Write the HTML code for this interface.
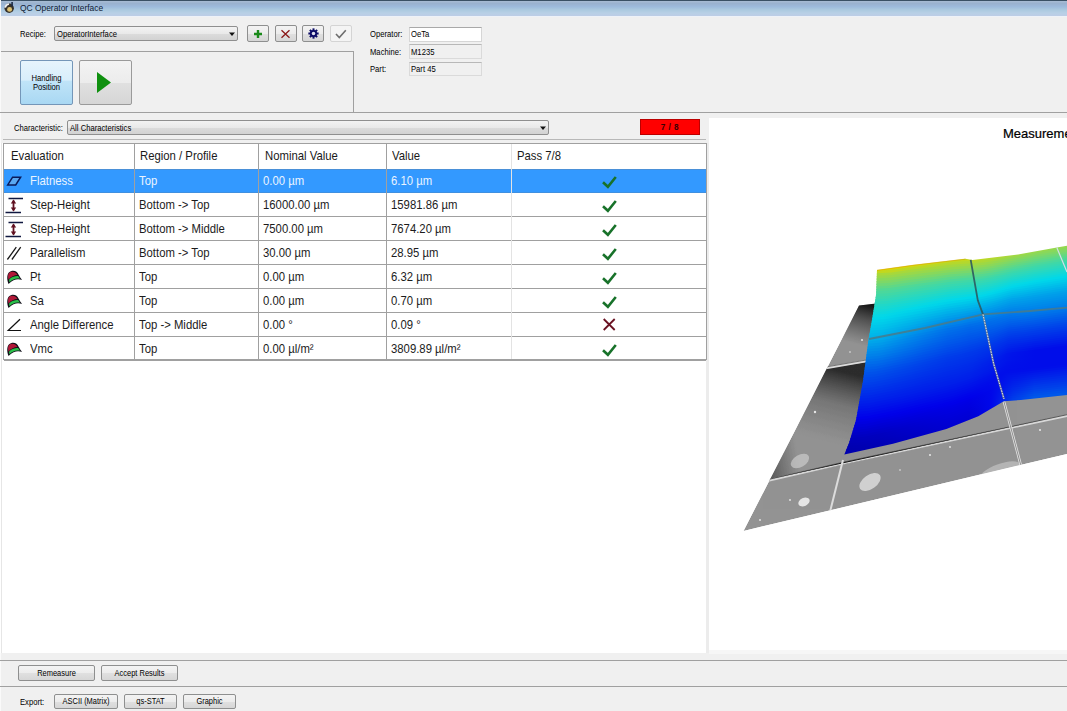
<!DOCTYPE html>
<html><head><meta charset="utf-8">
<style>
*{margin:0;padding:0;box-sizing:border-box}
html,body{width:1067px;height:711px;overflow:hidden;background:#f0f0f0;font-family:"Liberation Sans",sans-serif;color:#000;position:relative}
.a{position:absolute}
.t{position:absolute;white-space:nowrap;line-height:1}
.sm{font-size:9px;color:#000;transform:scaleX(0.85);transform-origin:0 0;}
.btn{position:absolute;border:1px solid #8e8f8f;border-radius:2px;background:linear-gradient(#f3f3f3 0%,#ececec 50%,#e0e0e0 51%,#d6d6d6 100%)}
.btxt{position:absolute;left:0;right:0;text-align:center;white-space:nowrap;line-height:1;font-size:9px;color:#000;transform:scaleX(0.83);transform-origin:50% 0}
.hl{position:absolute;height:1px;background:#a0a0a0}
.vl{position:absolute;width:1px;background:#a0a0a0}
.g{position:absolute;font-size:12.8px;transform:scaleX(0.885);transform-origin:0 0;line-height:1;white-space:nowrap;color:#1a1a1a}
.box{position:absolute;border:1px solid #d6d6d6;border-top-color:#a9a9a9}
</style></head><body>
<!-- title bar -->
<div class="a" style="left:0;top:1px;width:1067px;height:15px;background:linear-gradient(#a8bcd4 0px,#9ab2cf 2.5px,#9dbadb 5.5px,#accae0 9px,#b8d0e6 12px,#bdcde6 15px)"></div>
<div class="a" style="left:0;top:0;width:1067px;height:1px;background:#3a5064"></div>
<div class="a" style="left:0;top:16px;width:1067px;height:1px;background:#eef2f8"></div>
<div class="a" style="left:0;top:0;width:1px;height:711px;background:#fafafa"></div>
<svg class="a" style="left:3px;top:1px" width="12" height="13" viewBox="0 0 12 13"><circle cx="6.2" cy="7.2" r="4.7" fill="#35302a"/><ellipse cx="6.6" cy="8.4" rx="2.5" ry="2.3" fill="#dcc070"/><path d="M2.2 6.6Q2.8 3.4 6 3" stroke="#f4f4f4" stroke-width="1.7" fill="none"/><rect x="8.3" y="1" width="1.6" height="4.2" fill="#1c2c48"/></svg>
<div class="t" style="left:20px;top:2.8px;font-size:9.5px;color:#102034;transform:scaleX(0.885);transform-origin:0 0">QC Operator Interface</div>

<!-- recipe row -->
<div class="t sm" style="left:19.5px;top:29.5px">Recipe:</div>
<div class="a" style="left:54px;top:26px;width:184px;height:15px;border:1px solid #8f8f8f;border-radius:2px;background:linear-gradient(#f3f3f3,#e9e9e9 50%,#dcdcdc 51%,#d2d2d2)"></div>
<div class="t sm" style="left:56.5px;top:29.5px">OperatorInterface</div>
<svg class="a" style="left:229px;top:32px" width="7" height="5"><path d="M0 0.5h6l-3 3.5z" fill="#111"/></svg>

<div class="btn" style="left:247px;top:25px;width:22px;height:17px"></div>
<svg class="a" style="left:253px;top:29px" width="10" height="10" viewBox="0 0 10 10"><path d="M5 1V9M1 5H9" stroke="#1a8a1a" stroke-width="2.4"/></svg>
<div class="btn" style="left:275px;top:25px;width:22px;height:17px"></div>
<svg class="a" style="left:280px;top:28.5px" width="11" height="10" viewBox="0 0 11 10"><path d="M1.5 1.2L9.5 8.8M9.5 1.2L1.5 8.8" stroke="#8a1818" stroke-width="1.3"/></svg>
<div class="btn" style="left:302px;top:25px;width:22px;height:17px"></div>
<svg class="a" style="left:307.5px;top:28px" width="11" height="11" viewBox="0 0 12 12"><g fill="#0c0c66"><circle cx="6" cy="6" r="3.9"/><rect x="4.9" y="0.4" width="2.2" height="11.2"/><rect x="0.4" y="4.9" width="11.2" height="2.2"/><rect x="4.9" y="0.4" width="2.2" height="11.2" transform="rotate(45 6 6)"/><rect x="4.9" y="0.4" width="2.2" height="11.2" transform="rotate(-45 6 6)"/></g><circle cx="6" cy="6" r="1.9" fill="#e0e0ee"/></svg>
<div class="a" style="left:330px;top:25px;width:22px;height:17px;border:1px solid #d4d4d4;border-radius:2px;background:#f4f4f4"></div>
<svg class="a" style="left:335px;top:29px" width="12" height="10" viewBox="0 0 12 10"><path d="M1 5L4.3 8.6L10.8 1.2" stroke="#6e6e6e" stroke-width="1.6" fill="none"/></svg>

<!-- group panel -->
<div class="hl" style="left:1px;top:51px;width:353px"></div>
<div class="vl" style="left:353px;top:51px;height:62px"></div>
<div class="a" style="left:20px;top:60px;width:53px;height:45px;border:1px solid #7496b8;border-radius:2px;background:linear-gradient(#e6f4fc,#d8eefb 45%,#c0e4f8 46%,#a9d8f3)"></div>
<div class="t sm" style="left:20px;width:53px;text-align:center;transform-origin:50% 0;top:73.5px;line-height:9.5px">Handling<br>Position</div>
<div class="btn" style="left:79px;top:60px;width:53px;height:45px;border-color:#9a9a9a"></div>
<svg class="a" style="left:96px;top:71px" width="16" height="23" viewBox="0 0 16 23"><path d="M1 1L15 11.5L1 22z" fill="#0f900f"/></svg>

<!-- operator info -->
<div class="t sm" style="left:369.5px;top:30px">Operator:</div>
<div class="t sm" style="left:369.5px;top:47.8px">Machine:</div>
<div class="t sm" style="left:369.5px;top:65.3px">Part:</div>
<div class="box" style="left:409px;top:27px;width:73px;height:14.5px;background:#fff"></div>
<div class="box" style="left:409px;top:44px;width:73px;height:14.5px;background:#f0f0f0;border-color:#dadada;border-top-color:#b8b8b8"></div>
<div class="box" style="left:409px;top:61.5px;width:73px;height:14px;background:#f0f0f0;border-color:#dadada;border-top-color:#b8b8b8"></div>
<div class="t sm" style="left:411px;top:30.3px">OeTa</div>
<div class="t sm" style="left:411px;top:47.8px">M1235</div>
<div class="t sm" style="left:411px;top:65.3px">Part 45</div>

<div class="hl" style="left:0;top:112px;width:1067px"></div>

<!-- characteristic row -->
<div class="t sm" style="left:13.5px;top:123.5px">Characteristic:</div>
<div class="a" style="left:67px;top:120px;width:482px;height:15px;border:1px solid #8f8f8f;border-radius:2px;background:linear-gradient(#f3f3f3,#e9e9e9 50%,#dcdcdc 51%,#d2d2d2)"></div>
<div class="t sm" style="left:70px;top:123.5px">All Characteristics</div>
<svg class="a" style="left:539.5px;top:125.5px" width="7" height="5"><path d="M0 0.5h6l-3 3.5z" fill="#111"/></svg>
<div class="a" style="left:640px;top:119px;width:60px;height:16px;background:#f00;border:1px solid #b00"></div>
<div class="t" style="left:640px;width:60px;text-align:center;top:123.3px;font-size:8.6px;font-weight:bold;letter-spacing:0.5px;color:#3a0000;transform:scaleX(0.95);transform-origin:50% 0">7 / 8</div>
<div class="hl" style="left:3px;top:139px;width:703px;background:#b8b8b8"></div>

<!-- left white panel & right panel -->
<div class="a" style="left:0;top:143px;width:706px;height:510px;background:#fff"></div><div class="a" style="left:706px;top:143px;width:3px;height:510px;background:#ececec"></div><div class="a" style="left:1px;top:143px;width:1px;height:510px;background:#e6e6e6"></div>
<div class="a" style="left:709px;top:118px;width:358px;height:532px;background:#fff"></div><div class="a" style="left:709px;top:650px;width:358px;height:4px;background:#f6f6f6"></div>

<!--3D--><svg class="a" style="left:0;top:0" width="1067" height="711" viewBox="0 0 1067 711">
<defs>
<filter id="blur8" x="-50%" y="-50%" width="200%" height="200%"><feGaussianBlur stdDeviation="10"/></filter>
<linearGradient id="dk1" gradientUnits="userSpaceOnUse" x1="835" y1="370" x2="818" y2="440"><stop offset="0" stop-color="#1a1a1a" stop-opacity="0.85"/><stop offset="0.45" stop-color="#333" stop-opacity="0.3"/><stop offset="1" stop-color="#444" stop-opacity="0"/></linearGradient>
<linearGradient id="dk2" gradientUnits="userSpaceOnUse" x1="868" y1="305" x2="858" y2="345"><stop offset="0" stop-color="#101010" stop-opacity="0.95"/><stop offset="0.35" stop-color="#222" stop-opacity="0.6"/><stop offset="1" stop-color="#333" stop-opacity="0"/></linearGradient>
<linearGradient id="dk3" gradientUnits="userSpaceOnUse" x1="770" y1="470" x2="800" y2="465"><stop offset="0" stop-color="#222" stop-opacity="0.5"/><stop offset="1" stop-color="#333" stop-opacity="0"/></linearGradient>
<clipPath id="pc"><polygon points="859,305.5 876,303.5 1075,268 1075,452 743.5,531"/></clipPath>
</defs>
<g clip-path="url(#pc)">
<polygon points="859,305.5 876,303.5 1075,268 1075,452 743.5,531" fill="#939393"/>
<polygon points="840,300 885,300 878,362 820,368" fill="url(#dk2)"/>
<polygon points="822,369 880,360 862,465 768,481" fill="url(#dk1)"/>
<polygon points="822,369 790,430 768,481 810,472" fill="url(#dk3)"/>
<path d="M823,368.5 L872,360" stroke="#dcdcdc" stroke-width="2.4"/>
<path d="M823,367.5 L872,359" stroke="#505050" stroke-width="0.7"/>

<path d="M766,481 L844,463 L1075,414" stroke="#d8d8d8" stroke-width="2.4"/>
<path d="M766,480 L844,462 L1075,413" stroke="#404040" stroke-width="0.8"/>
<path d="M843,460 L830,512" stroke="#dcdcdc" stroke-width="2"/>
<path d="M1003,398 L1021,466" stroke="#e4e4e4" stroke-width="2.6"/>
<path d="M1003,398 L1021,466" stroke="#555" stroke-width="0.6"/>
<ellipse cx="804" cy="502" rx="6" ry="4" fill="#eee" opacity="0.9" transform="rotate(-25 804 502)"/>
<ellipse cx="800" cy="461" rx="10" ry="6" fill="#ddd" opacity="0.55" transform="rotate(-30 800 461)"/>
<ellipse cx="870" cy="482" rx="12" ry="7" fill="#e4e4e4" opacity="0.75" transform="rotate(-35 870 482)"/>
<ellipse cx="1000" cy="472" rx="22" ry="8" fill="#ddd" opacity="0.45" transform="rotate(-20 1000 472)"/>
<ellipse cx="972" cy="410" rx="6" ry="3" fill="#eee" opacity="0.6"/>
<g fill="#fff" opacity="0.8"><circle cx="862" cy="340" r="1"/><circle cx="850" cy="352" r="0.8"/><circle cx="815" cy="412" r="1.2"/><circle cx="790" cy="500" r="0.9"/><circle cx="930" cy="455" r="1"/><circle cx="950" cy="447" r="0.9"/><circle cx="1040" cy="430" r="1"/><circle cx="900" cy="470" r="0.8"/><circle cx="760" cy="520" r="0.9"/></g>
</g>
<defs><clipPath id="sc"><path d="M877.0,270.0 L912.7,265.0 L965.4,258.8 L972.5,259.9 L1018.0,254.6 L1056.8,247.6 L1075.0,244.5 L1075,394 1075.0,394.0 L1020.9,400.0 L1003.8,401.3 L978.3,416.2 L946.4,429.0 L893.0,443.8 L844.3,454.5 844.3,454.5 L849.0,443.0 L856.0,420.0 L863.0,381.0 L868.6,339.0 L872.0,320.0 L876.0,295.0 L877.0,270.0 Z"/></clipPath><linearGradient id="r0" gradientUnits="userSpaceOnUse" x1="850" y1="0" x2="1067" y2="0"><stop offset="0" stop-color="#e0cc00"/><stop offset="0.15" stop-color="#e0d400"/><stop offset="0.3" stop-color="#d4d80c"/><stop offset="0.45" stop-color="#c6d81b"/><stop offset="0.55" stop-color="#c2d81f"/><stop offset="0.65" stop-color="#b7d82b"/><stop offset="0.75" stop-color="#a2d841"/><stop offset="0.85" stop-color="#96d84d"/><stop offset="1.0" stop-color="#96d84d"/></linearGradient><linearGradient id="r1" gradientUnits="userSpaceOnUse" x1="850" y1="0" x2="1067" y2="0"><stop offset="0" stop-color="#c6d81b"/><stop offset="0.15" stop-color="#c2d81e"/><stop offset="0.3" stop-color="#bbd826"/><stop offset="0.45" stop-color="#b5d82c"/><stop offset="0.55" stop-color="#b3d82e"/><stop offset="0.65" stop-color="#a8d83a"/><stop offset="0.75" stop-color="#94d84f"/><stop offset="0.85" stop-color="#89d85a"/><stop offset="1.0" stop-color="#89d85a"/></linearGradient><linearGradient id="r2" gradientUnits="userSpaceOnUse" x1="850" y1="0" x2="1067" y2="0"><stop offset="0" stop-color="#a9d839"/><stop offset="0.15" stop-color="#a8d83a"/><stop offset="0.3" stop-color="#a6d83c"/><stop offset="0.45" stop-color="#a5d83d"/><stop offset="0.55" stop-color="#a4d83e"/><stop offset="0.65" stop-color="#9ad848"/><stop offset="0.75" stop-color="#87d85d"/><stop offset="0.85" stop-color="#7dd867"/><stop offset="1.0" stop-color="#7dd867"/></linearGradient><linearGradient id="r3" gradientUnits="userSpaceOnUse" x1="850" y1="0" x2="1067" y2="0"><stop offset="0" stop-color="#9bd848"/><stop offset="0.15" stop-color="#9ad849"/><stop offset="0.3" stop-color="#98d84b"/><stop offset="0.45" stop-color="#96d84d"/><stop offset="0.55" stop-color="#96d84d"/><stop offset="0.65" stop-color="#8cd857"/><stop offset="0.75" stop-color="#7ad86b"/><stop offset="0.85" stop-color="#70d875"/><stop offset="1.0" stop-color="#70d875"/></linearGradient><linearGradient id="r4" gradientUnits="userSpaceOnUse" x1="850" y1="0" x2="1067" y2="0"><stop offset="0" stop-color="#8cd857"/><stop offset="0.15" stop-color="#8bd858"/><stop offset="0.3" stop-color="#89d85a"/><stop offset="0.45" stop-color="#87d85c"/><stop offset="0.55" stop-color="#87d85d"/><stop offset="0.65" stop-color="#7ed866"/><stop offset="0.75" stop-color="#6cd878"/><stop offset="0.85" stop-color="#63d882"/><stop offset="1.0" stop-color="#63d882"/></linearGradient><linearGradient id="r5" gradientUnits="userSpaceOnUse" x1="850" y1="0" x2="1067" y2="0"><stop offset="0" stop-color="#7ed866"/><stop offset="0.15" stop-color="#7dd867"/><stop offset="0.3" stop-color="#7bd869"/><stop offset="0.45" stop-color="#79d86b"/><stop offset="0.55" stop-color="#78d86c"/><stop offset="0.65" stop-color="#6fd875"/><stop offset="0.75" stop-color="#5fd886"/><stop offset="0.85" stop-color="#56d890"/><stop offset="1.0" stop-color="#56d890"/></linearGradient><linearGradient id="r6" gradientUnits="userSpaceOnUse" x1="850" y1="0" x2="1067" y2="0"><stop offset="0" stop-color="#70d875"/><stop offset="0.15" stop-color="#6fd876"/><stop offset="0.3" stop-color="#6cd879"/><stop offset="0.45" stop-color="#6ad87b"/><stop offset="0.55" stop-color="#69d87c"/><stop offset="0.65" stop-color="#61d884"/><stop offset="0.75" stop-color="#52d894"/><stop offset="0.85" stop-color="#49d89d"/><stop offset="1.0" stop-color="#49d89d"/></linearGradient><linearGradient id="r7" gradientUnits="userSpaceOnUse" x1="850" y1="0" x2="1067" y2="0"><stop offset="0" stop-color="#62d884"/><stop offset="0.15" stop-color="#60d885"/><stop offset="0.3" stop-color="#5ed888"/><stop offset="0.45" stop-color="#5bd88a"/><stop offset="0.55" stop-color="#5ad88b"/><stop offset="0.65" stop-color="#53d893"/><stop offset="0.75" stop-color="#46d8a1"/><stop offset="0.85" stop-color="#3ed8a8"/><stop offset="1.0" stop-color="#3ed8a8"/></linearGradient><linearGradient id="r8" gradientUnits="userSpaceOnUse" x1="850" y1="0" x2="1067" y2="0"><stop offset="0" stop-color="#54d892"/><stop offset="0.15" stop-color="#52d893"/><stop offset="0.3" stop-color="#4fd897"/><stop offset="0.45" stop-color="#4cd89a"/><stop offset="0.55" stop-color="#4cd89a"/><stop offset="0.65" stop-color="#46d8a0"/><stop offset="0.75" stop-color="#3bd8ab"/><stop offset="0.85" stop-color="#36d8b1"/><stop offset="1.0" stop-color="#36d8b1"/></linearGradient><linearGradient id="r9" gradientUnits="userSpaceOnUse" x1="850" y1="0" x2="1067" y2="0"><stop offset="0" stop-color="#4cd89a"/><stop offset="0.15" stop-color="#4ad89d"/><stop offset="0.3" stop-color="#45d8a2"/><stop offset="0.45" stop-color="#40d8a6"/><stop offset="0.55" stop-color="#3fd8a8"/><stop offset="0.65" stop-color="#3ad8ac"/><stop offset="0.75" stop-color="#32d8b6"/><stop offset="0.85" stop-color="#2dd8bb"/><stop offset="1.0" stop-color="#2dd8bb"/></linearGradient><linearGradient id="r10" gradientUnits="userSpaceOnUse" x1="850" y1="0" x2="1067" y2="0"><stop offset="0" stop-color="#44d8a3"/><stop offset="0.15" stop-color="#41d8a5"/><stop offset="0.3" stop-color="#3cd8ab"/><stop offset="0.45" stop-color="#37d8b0"/><stop offset="0.55" stop-color="#36d8b1"/><stop offset="0.65" stop-color="#32d8b6"/><stop offset="0.75" stop-color="#29d8bf"/><stop offset="0.85" stop-color="#24d8c4"/><stop offset="1.0" stop-color="#24d8c4"/></linearGradient><linearGradient id="r11" gradientUnits="userSpaceOnUse" x1="850" y1="0" x2="1067" y2="0"><stop offset="0" stop-color="#3cd8ab"/><stop offset="0.15" stop-color="#39d8ae"/><stop offset="0.3" stop-color="#33d8b4"/><stop offset="0.45" stop-color="#2ed8b9"/><stop offset="0.55" stop-color="#2dd8ba"/><stop offset="0.65" stop-color="#29d8bf"/><stop offset="0.75" stop-color="#20d8c8"/><stop offset="0.85" stop-color="#1bd8cd"/><stop offset="1.0" stop-color="#1bd8cd"/></linearGradient><linearGradient id="r12" gradientUnits="userSpaceOnUse" x1="850" y1="0" x2="1067" y2="0"><stop offset="0" stop-color="#34d8b4"/><stop offset="0.15" stop-color="#31d8b7"/><stop offset="0.3" stop-color="#2bd8bd"/><stop offset="0.45" stop-color="#25d8c2"/><stop offset="0.55" stop-color="#24d8c4"/><stop offset="0.65" stop-color="#20d8c9"/><stop offset="0.75" stop-color="#17d8d1"/><stop offset="0.85" stop-color="#13d8d6"/><stop offset="1.0" stop-color="#13d8d6"/></linearGradient><linearGradient id="r13" gradientUnits="userSpaceOnUse" x1="850" y1="0" x2="1067" y2="0"><stop offset="0" stop-color="#2bd8bc"/><stop offset="0.15" stop-color="#28d8bf"/><stop offset="0.3" stop-color="#22d8c6"/><stop offset="0.45" stop-color="#1cd8cc"/><stop offset="0.55" stop-color="#1bd8cd"/><stop offset="0.65" stop-color="#17d8d2"/><stop offset="0.75" stop-color="#0ed8db"/><stop offset="0.85" stop-color="#0ad8df"/><stop offset="1.0" stop-color="#0ad8df"/></linearGradient><linearGradient id="r14" gradientUnits="userSpaceOnUse" x1="850" y1="0" x2="1067" y2="0"><stop offset="0" stop-color="#23d8c5"/><stop offset="0.15" stop-color="#20d8c8"/><stop offset="0.3" stop-color="#19d8cf"/><stop offset="0.45" stop-color="#13d8d5"/><stop offset="0.55" stop-color="#12d8d7"/><stop offset="0.65" stop-color="#0ed8db"/><stop offset="0.75" stop-color="#06d8e4"/><stop offset="0.85" stop-color="#01d8e8"/><stop offset="1.0" stop-color="#01d8e8"/></linearGradient><linearGradient id="r15" gradientUnits="userSpaceOnUse" x1="850" y1="0" x2="1067" y2="0"><stop offset="0" stop-color="#1cd8cc"/><stop offset="0.15" stop-color="#19d8d0"/><stop offset="0.3" stop-color="#11d8d8"/><stop offset="0.45" stop-color="#0bd8df"/><stop offset="0.55" stop-color="#09d8e0"/><stop offset="0.65" stop-color="#05d8e5"/><stop offset="0.75" stop-color="#00d6ea"/><stop offset="0.85" stop-color="#00d2ea"/><stop offset="1.0" stop-color="#00d2ea"/></linearGradient><linearGradient id="r16" gradientUnits="userSpaceOnUse" x1="850" y1="0" x2="1067" y2="0"><stop offset="0" stop-color="#16d8d3"/><stop offset="0.15" stop-color="#12d8d7"/><stop offset="0.3" stop-color="#09d8e0"/><stop offset="0.45" stop-color="#02d8e8"/><stop offset="0.55" stop-color="#00d8ea"/><stop offset="0.65" stop-color="#00d5ea"/><stop offset="0.75" stop-color="#00ceea"/><stop offset="0.85" stop-color="#00caea"/><stop offset="1.0" stop-color="#00caea"/></linearGradient><linearGradient id="r17" gradientUnits="userSpaceOnUse" x1="850" y1="0" x2="1067" y2="0"><stop offset="0" stop-color="#0fd8da"/><stop offset="0.15" stop-color="#0bd8de"/><stop offset="0.3" stop-color="#01d8e8"/><stop offset="0.45" stop-color="#00d2ea"/><stop offset="0.55" stop-color="#00d0ea"/><stop offset="0.65" stop-color="#00ccea"/><stop offset="0.75" stop-color="#00c5ea"/><stop offset="0.85" stop-color="#00c2ea"/><stop offset="1.0" stop-color="#00c2ea"/></linearGradient><linearGradient id="r18" gradientUnits="userSpaceOnUse" x1="850" y1="0" x2="1067" y2="0"><stop offset="0" stop-color="#09d8e0"/><stop offset="0.15" stop-color="#04d8e6"/><stop offset="0.3" stop-color="#00d2ea"/><stop offset="0.45" stop-color="#00c9ea"/><stop offset="0.55" stop-color="#00c7ea"/><stop offset="0.65" stop-color="#00c4ea"/><stop offset="0.75" stop-color="#00bdea"/><stop offset="0.85" stop-color="#00baea"/><stop offset="1.0" stop-color="#00baea"/></linearGradient><linearGradient id="r19" gradientUnits="userSpaceOnUse" x1="850" y1="0" x2="1067" y2="0"><stop offset="0" stop-color="#02d8e7"/><stop offset="0.15" stop-color="#00d6ea"/><stop offset="0.3" stop-color="#00cbea"/><stop offset="0.45" stop-color="#00c1ea"/><stop offset="0.55" stop-color="#00beea"/><stop offset="0.65" stop-color="#00bbea"/><stop offset="0.75" stop-color="#00b5ea"/><stop offset="0.85" stop-color="#00b2ea"/><stop offset="1.0" stop-color="#00b2ea"/></linearGradient><linearGradient id="r20" gradientUnits="userSpaceOnUse" x1="850" y1="0" x2="1067" y2="0"><stop offset="0" stop-color="#00d6ea"/><stop offset="0.15" stop-color="#00d0ea"/><stop offset="0.3" stop-color="#00c3ea"/><stop offset="0.45" stop-color="#00b8ea"/><stop offset="0.55" stop-color="#00b6ea"/><stop offset="0.65" stop-color="#00b2ea"/><stop offset="0.75" stop-color="#00adea"/><stop offset="0.85" stop-color="#00aaea"/><stop offset="1.0" stop-color="#00aaea"/></linearGradient><linearGradient id="r21" gradientUnits="userSpaceOnUse" x1="850" y1="0" x2="1067" y2="0"><stop offset="0" stop-color="#00d1ea"/><stop offset="0.15" stop-color="#00cbea"/><stop offset="0.3" stop-color="#00bcea"/><stop offset="0.45" stop-color="#00b0ea"/><stop offset="0.55" stop-color="#00adea"/><stop offset="0.65" stop-color="#00aaea"/><stop offset="0.75" stop-color="#00a4ea"/><stop offset="0.85" stop-color="#00a2ea"/><stop offset="1.0" stop-color="#00a2ea"/></linearGradient><linearGradient id="r22" gradientUnits="userSpaceOnUse" x1="850" y1="0" x2="1067" y2="0"><stop offset="0" stop-color="#00cdea"/><stop offset="0.15" stop-color="#00c5ea"/><stop offset="0.3" stop-color="#00b5ea"/><stop offset="0.45" stop-color="#00a7ea"/><stop offset="0.55" stop-color="#00a4ea"/><stop offset="0.65" stop-color="#00a2ea"/><stop offset="0.75" stop-color="#009eea"/><stop offset="0.85" stop-color="#009cea"/><stop offset="1.0" stop-color="#009cea"/></linearGradient><linearGradient id="r23" gradientUnits="userSpaceOnUse" x1="850" y1="0" x2="1067" y2="0"><stop offset="0" stop-color="#00c8ea"/><stop offset="0.15" stop-color="#00c0ea"/><stop offset="0.3" stop-color="#00aeea"/><stop offset="0.45" stop-color="#009fea"/><stop offset="0.55" stop-color="#009bea"/><stop offset="0.65" stop-color="#009aea"/><stop offset="0.75" stop-color="#0098ea"/><stop offset="0.85" stop-color="#0097ea"/><stop offset="1.0" stop-color="#0097ea"/></linearGradient><linearGradient id="r24" gradientUnits="userSpaceOnUse" x1="850" y1="0" x2="1067" y2="0"><stop offset="0" stop-color="#00c3ea"/><stop offset="0.15" stop-color="#00baea"/><stop offset="0.3" stop-color="#00a7ea"/><stop offset="0.45" stop-color="#0096ea"/><stop offset="0.55" stop-color="#0092ea"/><stop offset="0.65" stop-color="#0092ea"/><stop offset="0.75" stop-color="#0092ea"/><stop offset="0.85" stop-color="#0092ea"/><stop offset="1.0" stop-color="#0092ea"/></linearGradient><linearGradient id="r25" gradientUnits="userSpaceOnUse" x1="850" y1="0" x2="1067" y2="0"><stop offset="0" stop-color="#00bfea"/><stop offset="0.15" stop-color="#00b5ea"/><stop offset="0.3" stop-color="#00a0ea"/><stop offset="0.45" stop-color="#008dea"/><stop offset="0.55" stop-color="#0089ea"/><stop offset="0.65" stop-color="#008aea"/><stop offset="0.75" stop-color="#008cea"/><stop offset="0.85" stop-color="#008dea"/><stop offset="1.0" stop-color="#008dea"/></linearGradient><linearGradient id="r26" gradientUnits="userSpaceOnUse" x1="850" y1="0" x2="1067" y2="0"><stop offset="0" stop-color="#00baea"/><stop offset="0.15" stop-color="#00b0ea"/><stop offset="0.3" stop-color="#0099ea"/><stop offset="0.45" stop-color="#0085ea"/><stop offset="0.55" stop-color="#0080ea"/><stop offset="0.65" stop-color="#0082ea"/><stop offset="0.75" stop-color="#0086ea"/><stop offset="0.85" stop-color="#0088ea"/><stop offset="1.0" stop-color="#0088ea"/></linearGradient><linearGradient id="r27" gradientUnits="userSpaceOnUse" x1="850" y1="0" x2="1067" y2="0"><stop offset="0" stop-color="#00b3ea"/><stop offset="0.15" stop-color="#00a8ea"/><stop offset="0.3" stop-color="#0091ea"/><stop offset="0.45" stop-color="#007cea"/><stop offset="0.55" stop-color="#0077ea"/><stop offset="0.65" stop-color="#007aea"/><stop offset="0.75" stop-color="#007fea"/><stop offset="0.85" stop-color="#0083ea"/><stop offset="1.0" stop-color="#0083ea"/></linearGradient><linearGradient id="r28" gradientUnits="userSpaceOnUse" x1="850" y1="0" x2="1067" y2="0"><stop offset="0" stop-color="#00acea"/><stop offset="0.15" stop-color="#00a1ea"/><stop offset="0.3" stop-color="#0089ea"/><stop offset="0.45" stop-color="#0073ea"/><stop offset="0.55" stop-color="#006eea"/><stop offset="0.65" stop-color="#0072ea"/><stop offset="0.75" stop-color="#0079ea"/><stop offset="0.85" stop-color="#007dea"/><stop offset="1.0" stop-color="#007dea"/></linearGradient><linearGradient id="r29" gradientUnits="userSpaceOnUse" x1="850" y1="0" x2="1067" y2="0"><stop offset="0" stop-color="#00a5ea"/><stop offset="0.15" stop-color="#009aea"/><stop offset="0.3" stop-color="#0082ea"/><stop offset="0.45" stop-color="#006eea"/><stop offset="0.55" stop-color="#0068ea"/><stop offset="0.65" stop-color="#006cea"/><stop offset="0.75" stop-color="#0074ea"/><stop offset="0.85" stop-color="#0078ea"/><stop offset="1.0" stop-color="#0078ea"/></linearGradient><linearGradient id="r30" gradientUnits="userSpaceOnUse" x1="850" y1="0" x2="1067" y2="0"><stop offset="0" stop-color="#009dea"/><stop offset="0.15" stop-color="#0093ea"/><stop offset="0.3" stop-color="#007dea"/><stop offset="0.45" stop-color="#0069ea"/><stop offset="0.55" stop-color="#0064ea"/><stop offset="0.65" stop-color="#0068ea"/><stop offset="0.75" stop-color="#006eea"/><stop offset="0.85" stop-color="#0072ea"/><stop offset="1.0" stop-color="#0072ea"/></linearGradient><linearGradient id="r31" gradientUnits="userSpaceOnUse" x1="850" y1="0" x2="1067" y2="0"><stop offset="0" stop-color="#0096ea"/><stop offset="0.15" stop-color="#008cea"/><stop offset="0.3" stop-color="#0077ea"/><stop offset="0.45" stop-color="#0064ea"/><stop offset="0.55" stop-color="#0060ea"/><stop offset="0.65" stop-color="#0063ea"/><stop offset="0.75" stop-color="#0068ea"/><stop offset="0.85" stop-color="#006bea"/><stop offset="1.0" stop-color="#006bea"/></linearGradient><linearGradient id="r32" gradientUnits="userSpaceOnUse" x1="850" y1="0" x2="1067" y2="0"><stop offset="0" stop-color="#008fea"/><stop offset="0.15" stop-color="#0085ea"/><stop offset="0.3" stop-color="#0072ea"/><stop offset="0.45" stop-color="#0060ea"/><stop offset="0.55" stop-color="#005bea"/><stop offset="0.65" stop-color="#005eea"/><stop offset="0.75" stop-color="#0062ea"/><stop offset="0.85" stop-color="#0064ea"/><stop offset="1.0" stop-color="#0064ea"/></linearGradient><linearGradient id="r33" gradientUnits="userSpaceOnUse" x1="850" y1="0" x2="1067" y2="0"><stop offset="0" stop-color="#0088ea"/><stop offset="0.15" stop-color="#007fea"/><stop offset="0.3" stop-color="#006cea"/><stop offset="0.45" stop-color="#005bea"/><stop offset="0.55" stop-color="#0057ea"/><stop offset="0.65" stop-color="#0059ea"/><stop offset="0.75" stop-color="#005cea"/><stop offset="0.85" stop-color="#005dea"/><stop offset="1.0" stop-color="#005dea"/></linearGradient><linearGradient id="r34" gradientUnits="userSpaceOnUse" x1="850" y1="0" x2="1067" y2="0"><stop offset="0" stop-color="#0080ea"/><stop offset="0.15" stop-color="#0078ea"/><stop offset="0.3" stop-color="#0066ea"/><stop offset="0.45" stop-color="#0057ea"/><stop offset="0.55" stop-color="#0053ea"/><stop offset="0.65" stop-color="#0054ea"/><stop offset="0.75" stop-color="#0056ea"/><stop offset="0.85" stop-color="#0057ea"/><stop offset="1.0" stop-color="#0057ea"/></linearGradient><linearGradient id="r35" gradientUnits="userSpaceOnUse" x1="850" y1="0" x2="1067" y2="0"><stop offset="0" stop-color="#0079ea"/><stop offset="0.15" stop-color="#0071ea"/><stop offset="0.3" stop-color="#0061ea"/><stop offset="0.45" stop-color="#0052ea"/><stop offset="0.55" stop-color="#004eea"/><stop offset="0.65" stop-color="#004fea"/><stop offset="0.75" stop-color="#004fea"/><stop offset="0.85" stop-color="#0050ea"/><stop offset="1.0" stop-color="#0050ea"/></linearGradient><linearGradient id="r36" gradientUnits="userSpaceOnUse" x1="850" y1="0" x2="1067" y2="0"><stop offset="0" stop-color="#0072ea"/><stop offset="0.15" stop-color="#006aea"/><stop offset="0.3" stop-color="#005bea"/><stop offset="0.45" stop-color="#004dea"/><stop offset="0.55" stop-color="#004aea"/><stop offset="0.65" stop-color="#004aea"/><stop offset="0.75" stop-color="#0049ea"/><stop offset="0.85" stop-color="#0049ea"/><stop offset="1.0" stop-color="#0049ea"/></linearGradient><linearGradient id="r37" gradientUnits="userSpaceOnUse" x1="850" y1="0" x2="1067" y2="0"><stop offset="0" stop-color="#006aea"/><stop offset="0.15" stop-color="#0064ea"/><stop offset="0.3" stop-color="#0055ea"/><stop offset="0.45" stop-color="#0049ea"/><stop offset="0.55" stop-color="#0045ea"/><stop offset="0.65" stop-color="#0045ea"/><stop offset="0.75" stop-color="#0043ea"/><stop offset="0.85" stop-color="#0043ea"/><stop offset="1.0" stop-color="#0043ea"/></linearGradient><linearGradient id="r38" gradientUnits="userSpaceOnUse" x1="850" y1="0" x2="1067" y2="0"><stop offset="0" stop-color="#0063ea"/><stop offset="0.15" stop-color="#005dea"/><stop offset="0.3" stop-color="#0050ea"/><stop offset="0.45" stop-color="#0044ea"/><stop offset="0.55" stop-color="#0041ea"/><stop offset="0.65" stop-color="#0040ea"/><stop offset="0.75" stop-color="#003eea"/><stop offset="0.85" stop-color="#003dea"/><stop offset="1.0" stop-color="#003dea"/></linearGradient><linearGradient id="r39" gradientUnits="userSpaceOnUse" x1="850" y1="0" x2="1067" y2="0"><stop offset="0" stop-color="#005cea"/><stop offset="0.15" stop-color="#0056ea"/><stop offset="0.3" stop-color="#004aea"/><stop offset="0.45" stop-color="#003fea"/><stop offset="0.55" stop-color="#003dea"/><stop offset="0.65" stop-color="#003bea"/><stop offset="0.75" stop-color="#0039ea"/><stop offset="0.85" stop-color="#0038ea"/><stop offset="1.0" stop-color="#0038ea"/></linearGradient><linearGradient id="r40" gradientUnits="userSpaceOnUse" x1="850" y1="0" x2="1067" y2="0"><stop offset="0" stop-color="#0055ea"/><stop offset="0.15" stop-color="#0050ea"/><stop offset="0.3" stop-color="#0045ea"/><stop offset="0.45" stop-color="#003bea"/><stop offset="0.55" stop-color="#0038ea"/><stop offset="0.65" stop-color="#0037ea"/><stop offset="0.75" stop-color="#0034ea"/><stop offset="0.85" stop-color="#0032ea"/><stop offset="1.0" stop-color="#0032ea"/></linearGradient><linearGradient id="r41" gradientUnits="userSpaceOnUse" x1="850" y1="0" x2="1067" y2="0"><stop offset="0" stop-color="#0050ea"/><stop offset="0.15" stop-color="#004bea"/><stop offset="0.3" stop-color="#0041ea"/><stop offset="0.45" stop-color="#0038ea"/><stop offset="0.55" stop-color="#0036ea"/><stop offset="0.65" stop-color="#0033ea"/><stop offset="0.75" stop-color="#002fea"/><stop offset="0.85" stop-color="#002dea"/><stop offset="1.0" stop-color="#002dea"/></linearGradient><linearGradient id="r42" gradientUnits="userSpaceOnUse" x1="850" y1="0" x2="1067" y2="0"><stop offset="0" stop-color="#004bea"/><stop offset="0.15" stop-color="#0046ea"/><stop offset="0.3" stop-color="#003eea"/><stop offset="0.45" stop-color="#0035ea"/><stop offset="0.55" stop-color="#0033ea"/><stop offset="0.65" stop-color="#0030ea"/><stop offset="0.75" stop-color="#002bea"/><stop offset="0.85" stop-color="#0028ea"/><stop offset="1.0" stop-color="#0028ea"/></linearGradient><linearGradient id="r43" gradientUnits="userSpaceOnUse" x1="850" y1="0" x2="1067" y2="0"><stop offset="0" stop-color="#0046ea"/><stop offset="0.15" stop-color="#0042ea"/><stop offset="0.3" stop-color="#003aea"/><stop offset="0.45" stop-color="#0033ea"/><stop offset="0.55" stop-color="#0031ea"/><stop offset="0.65" stop-color="#002dea"/><stop offset="0.75" stop-color="#0026ea"/><stop offset="0.85" stop-color="#0022ea"/><stop offset="1.0" stop-color="#0022ea"/></linearGradient><linearGradient id="r44" gradientUnits="userSpaceOnUse" x1="850" y1="0" x2="1067" y2="0"><stop offset="0" stop-color="#0041ea"/><stop offset="0.15" stop-color="#003dea"/><stop offset="0.3" stop-color="#0036ea"/><stop offset="0.45" stop-color="#0030ea"/><stop offset="0.55" stop-color="#002fea"/><stop offset="0.65" stop-color="#002aea"/><stop offset="0.75" stop-color="#0022ea"/><stop offset="0.85" stop-color="#001dea"/><stop offset="1.0" stop-color="#001dea"/></linearGradient><linearGradient id="r45" gradientUnits="userSpaceOnUse" x1="850" y1="0" x2="1067" y2="0"><stop offset="0" stop-color="#003bea"/><stop offset="0.15" stop-color="#0039ea"/><stop offset="0.3" stop-color="#0033ea"/><stop offset="0.45" stop-color="#002eea"/><stop offset="0.55" stop-color="#002cea"/><stop offset="0.65" stop-color="#0027ea"/><stop offset="0.75" stop-color="#001dea"/><stop offset="0.85" stop-color="#0018ea"/><stop offset="1.0" stop-color="#0018ea"/></linearGradient><linearGradient id="r46" gradientUnits="userSpaceOnUse" x1="850" y1="0" x2="1067" y2="0"><stop offset="0" stop-color="#0036ea"/><stop offset="0.15" stop-color="#0034ea"/><stop offset="0.3" stop-color="#002fea"/><stop offset="0.45" stop-color="#002bea"/><stop offset="0.55" stop-color="#002aea"/><stop offset="0.65" stop-color="#0024ea"/><stop offset="0.75" stop-color="#0019ea"/><stop offset="0.85" stop-color="#0012ea"/><stop offset="1.0" stop-color="#0012ea"/></linearGradient><linearGradient id="r47" gradientUnits="userSpaceOnUse" x1="850" y1="0" x2="1067" y2="0"><stop offset="0" stop-color="#0032ea"/><stop offset="0.15" stop-color="#0030ea"/><stop offset="0.3" stop-color="#002cea"/><stop offset="0.45" stop-color="#0029ea"/><stop offset="0.55" stop-color="#0028ea"/><stop offset="0.65" stop-color="#0021ea"/><stop offset="0.75" stop-color="#0014ea"/><stop offset="0.85" stop-color="#000dea"/><stop offset="1.0" stop-color="#000dea"/></linearGradient><linearGradient id="r48" gradientUnits="userSpaceOnUse" x1="850" y1="0" x2="1067" y2="0"><stop offset="0" stop-color="#002dea"/><stop offset="0.15" stop-color="#002cea"/><stop offset="0.3" stop-color="#0029ea"/><stop offset="0.45" stop-color="#0026ea"/><stop offset="0.55" stop-color="#0026ea"/><stop offset="0.65" stop-color="#001fea"/><stop offset="0.75" stop-color="#0013ea"/><stop offset="0.85" stop-color="#000dea"/><stop offset="1.0" stop-color="#000dea"/></linearGradient><linearGradient id="r49" gradientUnits="userSpaceOnUse" x1="850" y1="0" x2="1067" y2="0"><stop offset="0" stop-color="#0028ea"/><stop offset="0.15" stop-color="#0027ea"/><stop offset="0.3" stop-color="#0025ea"/><stop offset="0.45" stop-color="#0024ea"/><stop offset="0.55" stop-color="#0023ea"/><stop offset="0.65" stop-color="#001dea"/><stop offset="0.75" stop-color="#0012ea"/><stop offset="0.85" stop-color="#000dea"/><stop offset="1.0" stop-color="#000dea"/></linearGradient><linearGradient id="r50" gradientUnits="userSpaceOnUse" x1="850" y1="0" x2="1067" y2="0"><stop offset="0" stop-color="#0023ea"/><stop offset="0.15" stop-color="#0023ea"/><stop offset="0.3" stop-color="#0022ea"/><stop offset="0.45" stop-color="#0021ea"/><stop offset="0.55" stop-color="#0021ea"/><stop offset="0.65" stop-color="#001cea"/><stop offset="0.75" stop-color="#0012ea"/><stop offset="0.85" stop-color="#000dea"/><stop offset="1.0" stop-color="#000dea"/></linearGradient><linearGradient id="r51" gradientUnits="userSpaceOnUse" x1="850" y1="0" x2="1067" y2="0"><stop offset="0" stop-color="#001fea"/><stop offset="0.15" stop-color="#001fea"/><stop offset="0.3" stop-color="#001fea"/><stop offset="0.45" stop-color="#001fea"/><stop offset="0.55" stop-color="#001fea"/><stop offset="0.65" stop-color="#001aea"/><stop offset="0.75" stop-color="#0011ea"/><stop offset="0.85" stop-color="#000dea"/><stop offset="1.0" stop-color="#000dea"/></linearGradient><linearGradient id="r52" gradientUnits="userSpaceOnUse" x1="850" y1="0" x2="1067" y2="0"><stop offset="0" stop-color="#001aea"/><stop offset="0.15" stop-color="#001aea"/><stop offset="0.3" stop-color="#001bea"/><stop offset="0.45" stop-color="#001bea"/><stop offset="0.55" stop-color="#001bea"/><stop offset="0.65" stop-color="#0018ea"/><stop offset="0.75" stop-color="#0010ea"/><stop offset="0.85" stop-color="#000dea"/><stop offset="1.0" stop-color="#000dea"/></linearGradient><linearGradient id="r53" gradientUnits="userSpaceOnUse" x1="850" y1="0" x2="1067" y2="0"><stop offset="0" stop-color="#0015ea"/><stop offset="0.15" stop-color="#0016ea"/><stop offset="0.3" stop-color="#0017ea"/><stop offset="0.45" stop-color="#0018ea"/><stop offset="0.55" stop-color="#0018ea"/><stop offset="0.65" stop-color="#0015ea"/><stop offset="0.75" stop-color="#000fea"/><stop offset="0.85" stop-color="#000dea"/><stop offset="1.0" stop-color="#000dea"/></linearGradient><linearGradient id="r54" gradientUnits="userSpaceOnUse" x1="850" y1="0" x2="1067" y2="0"><stop offset="0" stop-color="#0010ea"/><stop offset="0.15" stop-color="#0011ea"/><stop offset="0.3" stop-color="#0013ea"/><stop offset="0.45" stop-color="#0014ea"/><stop offset="0.55" stop-color="#0014ea"/><stop offset="0.65" stop-color="#0012ea"/><stop offset="0.75" stop-color="#000fea"/><stop offset="0.85" stop-color="#000dea"/><stop offset="1.0" stop-color="#000dea"/></linearGradient><linearGradient id="r55" gradientUnits="userSpaceOnUse" x1="850" y1="0" x2="1067" y2="0"><stop offset="0" stop-color="#000bea"/><stop offset="0.15" stop-color="#000cea"/><stop offset="0.3" stop-color="#000eea"/><stop offset="0.45" stop-color="#0010ea"/><stop offset="0.55" stop-color="#0011ea"/><stop offset="0.65" stop-color="#0010ea"/><stop offset="0.75" stop-color="#000eea"/><stop offset="0.85" stop-color="#000dea"/><stop offset="1.0" stop-color="#000dea"/></linearGradient><linearGradient id="r56" gradientUnits="userSpaceOnUse" x1="850" y1="0" x2="1067" y2="0"><stop offset="0" stop-color="#0006ea"/><stop offset="0.15" stop-color="#0007ea"/><stop offset="0.3" stop-color="#000aea"/><stop offset="0.45" stop-color="#000dea"/><stop offset="0.55" stop-color="#000dea"/><stop offset="0.65" stop-color="#000eea"/><stop offset="0.75" stop-color="#000fea"/><stop offset="0.85" stop-color="#000fea"/><stop offset="1.0" stop-color="#000fea"/></linearGradient><linearGradient id="r57" gradientUnits="userSpaceOnUse" x1="850" y1="0" x2="1067" y2="0"><stop offset="0" stop-color="#0000ea"/><stop offset="0.15" stop-color="#0002ea"/><stop offset="0.3" stop-color="#0005ea"/><stop offset="0.45" stop-color="#0009ea"/><stop offset="0.55" stop-color="#000aea"/><stop offset="0.65" stop-color="#000cea"/><stop offset="0.75" stop-color="#0012ea"/><stop offset="0.85" stop-color="#0014ea"/><stop offset="1.0" stop-color="#0014ea"/></linearGradient><linearGradient id="r58" gradientUnits="userSpaceOnUse" x1="850" y1="0" x2="1067" y2="0"><stop offset="0" stop-color="#0000e4"/><stop offset="0.15" stop-color="#0000e7"/><stop offset="0.3" stop-color="#0001ea"/><stop offset="0.45" stop-color="#0005ea"/><stop offset="0.55" stop-color="#0006ea"/><stop offset="0.65" stop-color="#000bea"/><stop offset="0.75" stop-color="#0015ea"/><stop offset="0.85" stop-color="#001aea"/><stop offset="1.0" stop-color="#001aea"/></linearGradient><linearGradient id="r59" gradientUnits="userSpaceOnUse" x1="850" y1="0" x2="1067" y2="0"><stop offset="0" stop-color="#0000de"/><stop offset="0.15" stop-color="#0000e1"/><stop offset="0.3" stop-color="#0000e7"/><stop offset="0.45" stop-color="#0001ea"/><stop offset="0.55" stop-color="#0003ea"/><stop offset="0.65" stop-color="#000aea"/><stop offset="0.75" stop-color="#0018ea"/><stop offset="0.85" stop-color="#001fea"/><stop offset="1.0" stop-color="#001fea"/></linearGradient><linearGradient id="r60" gradientUnits="userSpaceOnUse" x1="850" y1="0" x2="1067" y2="0"><stop offset="0" stop-color="#0000d8"/><stop offset="0.15" stop-color="#0000db"/><stop offset="0.3" stop-color="#0000e2"/><stop offset="0.45" stop-color="#0000e8"/><stop offset="0.55" stop-color="#0000ea"/><stop offset="0.65" stop-color="#0009ea"/><stop offset="0.75" stop-color="#001bea"/><stop offset="0.85" stop-color="#0024ea"/><stop offset="1.0" stop-color="#0024ea"/></linearGradient><linearGradient id="r61" gradientUnits="userSpaceOnUse" x1="850" y1="0" x2="1067" y2="0"><stop offset="0" stop-color="#0000d2"/><stop offset="0.15" stop-color="#0000d5"/><stop offset="0.3" stop-color="#0000dd"/><stop offset="0.45" stop-color="#0000e4"/><stop offset="0.55" stop-color="#0000e6"/><stop offset="0.65" stop-color="#0007ea"/><stop offset="0.75" stop-color="#001eea"/><stop offset="0.85" stop-color="#002aea"/><stop offset="1.0" stop-color="#002aea"/></linearGradient><linearGradient id="r62" gradientUnits="userSpaceOnUse" x1="850" y1="0" x2="1067" y2="0"><stop offset="0" stop-color="#0000cb"/><stop offset="0.15" stop-color="#0000d0"/><stop offset="0.3" stop-color="#0000d9"/><stop offset="0.45" stop-color="#0000e1"/><stop offset="0.55" stop-color="#0000e3"/><stop offset="0.65" stop-color="#0007ea"/><stop offset="0.75" stop-color="#0021ea"/><stop offset="0.85" stop-color="#002fea"/><stop offset="1.0" stop-color="#002fea"/></linearGradient><linearGradient id="r63" gradientUnits="userSpaceOnUse" x1="850" y1="0" x2="1067" y2="0"><stop offset="0" stop-color="#0000c5"/><stop offset="0.15" stop-color="#0000ca"/><stop offset="0.3" stop-color="#0000d5"/><stop offset="0.45" stop-color="#0000df"/><stop offset="0.55" stop-color="#0000e1"/><stop offset="0.65" stop-color="#0007ea"/><stop offset="0.75" stop-color="#0024ea"/><stop offset="0.85" stop-color="#0034ea"/><stop offset="1.0" stop-color="#0034ea"/></linearGradient><linearGradient id="r64" gradientUnits="userSpaceOnUse" x1="850" y1="0" x2="1067" y2="0"><stop offset="0" stop-color="#0000bf"/><stop offset="0.15" stop-color="#0000c5"/><stop offset="0.3" stop-color="#0000d1"/><stop offset="0.45" stop-color="#0000dc"/><stop offset="0.55" stop-color="#0000df"/><stop offset="0.65" stop-color="#0007ea"/><stop offset="0.75" stop-color="#0028ea"/><stop offset="0.85" stop-color="#003aea"/><stop offset="1.0" stop-color="#003aea"/></linearGradient><linearGradient id="r65" gradientUnits="userSpaceOnUse" x1="850" y1="0" x2="1067" y2="0"><stop offset="0" stop-color="#0000ba"/><stop offset="0.15" stop-color="#0000c0"/><stop offset="0.3" stop-color="#0000ce"/><stop offset="0.45" stop-color="#0000da"/><stop offset="0.55" stop-color="#0000dd"/><stop offset="0.65" stop-color="#0007ea"/><stop offset="0.75" stop-color="#002bea"/><stop offset="0.85" stop-color="#003fea"/><stop offset="1.0" stop-color="#003fea"/></linearGradient><linearGradient id="r66" gradientUnits="userSpaceOnUse" x1="850" y1="0" x2="1067" y2="0"><stop offset="0" stop-color="#0000b7"/><stop offset="0.15" stop-color="#0000be"/><stop offset="0.3" stop-color="#0000cb"/><stop offset="0.45" stop-color="#0000d7"/><stop offset="0.55" stop-color="#0000da"/><stop offset="0.65" stop-color="#0007ea"/><stop offset="0.75" stop-color="#002fea"/><stop offset="0.85" stop-color="#0045ea"/><stop offset="1.0" stop-color="#0045ea"/></linearGradient><linearGradient id="r67" gradientUnits="userSpaceOnUse" x1="850" y1="0" x2="1067" y2="0"><stop offset="0" stop-color="#0000b4"/><stop offset="0.15" stop-color="#0000bb"/><stop offset="0.3" stop-color="#0000c9"/><stop offset="0.45" stop-color="#0000d5"/><stop offset="0.55" stop-color="#0000d8"/><stop offset="0.65" stop-color="#0007ea"/><stop offset="0.75" stop-color="#0033ea"/><stop offset="0.85" stop-color="#004bea"/><stop offset="1.0" stop-color="#004bea"/></linearGradient><linearGradient id="r68" gradientUnits="userSpaceOnUse" x1="850" y1="0" x2="1067" y2="0"><stop offset="0" stop-color="#0000b1"/><stop offset="0.15" stop-color="#0000b8"/><stop offset="0.3" stop-color="#0000c6"/><stop offset="0.45" stop-color="#0000d3"/><stop offset="0.55" stop-color="#0000d6"/><stop offset="0.65" stop-color="#0007ea"/><stop offset="0.75" stop-color="#0037ea"/><stop offset="0.85" stop-color="#0051ea"/><stop offset="1.0" stop-color="#0051ea"/></linearGradient><linearGradient id="r69" gradientUnits="userSpaceOnUse" x1="850" y1="0" x2="1067" y2="0"><stop offset="0" stop-color="#0000af"/><stop offset="0.15" stop-color="#0000b5"/><stop offset="0.3" stop-color="#0000c4"/><stop offset="0.45" stop-color="#0000d1"/><stop offset="0.55" stop-color="#0000d4"/><stop offset="0.65" stop-color="#0007ea"/><stop offset="0.75" stop-color="#003bea"/><stop offset="0.85" stop-color="#0057ea"/><stop offset="1.0" stop-color="#0057ea"/></linearGradient></defs><g clip-path="url(#sc)"><polygon points="852.7,266.3 892.8,264.2 908.0,262.1 923.2,260.3 938.4,258.5 953.6,256.8 968.7,255.9 983.9,255.4 999.1,253.7 1014.3,252.1 1029.5,249.6 1044.6,246.8 1059.8,244.1 1075.0,241.5 1075.0,247.2 1059.7,249.8 1044.4,252.5 1029.2,255.3 1013.9,257.7 998.6,259.7 983.3,261.6 968.1,262.3 952.8,263.4 937.5,265.2 922.2,267.1 907.0,269.0 891.7,271.2 851.4,273.4" fill="url(#r0)"/><polygon points="851.7,271.9 891.9,269.7 907.2,267.6 922.4,265.7 937.7,263.8 952.9,262.0 968.2,261.0 983.5,260.3 998.7,258.4 1014.0,256.6 1029.2,254.1 1044.5,251.3 1059.7,248.6 1075.0,246.0 1075.0,249.4 1059.7,251.9 1044.4,254.6 1029.1,257.4 1013.7,259.8 998.4,261.9 983.1,263.9 967.8,264.7 952.5,265.9 937.2,267.8 921.9,269.6 906.6,271.6 891.2,273.8 850.9,276.0" fill="url(#r1)"/><polygon points="851.2,274.5 891.5,272.4 906.8,270.2 922.1,268.2 937.4,266.3 952.7,264.5 968.0,263.4 983.2,262.6 998.5,260.6 1013.8,258.6 1029.1,256.2 1044.4,253.5 1059.7,250.8 1075.0,248.2 1075.0,251.5 1059.7,254.1 1044.3,256.8 1029.0,259.5 1013.6,261.9 998.3,264.1 982.9,266.2 967.6,267.1 952.2,268.3 936.9,270.3 921.5,272.2 906.2,274.2 890.8,276.4 850.5,278.6" fill="url(#r2)"/><polygon points="850.7,277.2 891.1,275.0 906.4,272.8 921.7,270.8 937.0,268.9 952.4,266.9 967.7,265.8 983.0,264.9 998.4,262.8 1013.7,260.7 1029.0,258.3 1044.3,255.6 1059.7,252.9 1075.0,250.3 1075.0,253.6 1059.6,256.2 1044.2,258.9 1028.8,261.6 1013.5,264.0 998.1,266.3 982.7,268.5 967.3,269.5 951.9,270.8 936.5,272.8 921.2,274.8 905.8,276.8 890.4,279.0 850.0,281.3" fill="url(#r3)"/><polygon points="850.3,279.8 890.6,277.6 906.0,275.4 921.4,273.3 936.7,271.4 952.1,269.4 967.4,268.2 982.8,267.2 998.2,265.1 1013.5,262.8 1028.9,260.4 1044.3,257.7 1059.6,255.0 1075.0,252.4 1075.0,255.8 1059.6,258.3 1044.2,261.0 1028.7,263.7 1013.3,266.1 997.9,268.5 982.5,270.8 967.1,271.9 951.6,273.2 936.2,275.3 920.8,277.3 905.4,279.4 890.0,281.7 849.5,283.9" fill="url(#r4)"/><polygon points="849.8,282.4 890.2,280.2 905.6,277.9 921.0,275.9 936.4,273.9 951.8,271.9 967.2,270.6 982.6,269.5 998.0,267.3 1013.4,264.9 1028.8,262.5 1044.2,259.8 1059.6,257.1 1075.0,254.6 1075.0,257.9 1059.5,260.5 1044.1,263.1 1028.6,265.8 1013.2,268.2 997.7,270.7 982.3,273.1 966.8,274.3 951.3,275.7 935.9,277.8 920.4,279.9 905.0,282.0 889.5,284.3 849.1,286.6" fill="url(#r5)"/><polygon points="849.3,285.1 889.8,282.8 905.2,280.5 920.6,278.4 936.1,276.4 951.5,274.3 966.9,273.0 982.4,271.8 997.8,269.5 1013.3,267.0 1028.7,264.6 1044.1,261.9 1059.6,259.3 1075.0,256.7 1075.0,260.0 1059.5,262.6 1044.0,265.2 1028.5,267.9 1013.0,270.3 997.5,272.9 982.0,275.4 966.6,276.7 951.1,278.2 935.6,280.3 920.1,282.4 904.6,284.6 889.1,286.9 848.6,289.2" fill="url(#r6)"/><polygon points="848.9,287.7 889.3,285.4 904.8,283.1 920.3,281.0 935.7,278.9 951.2,276.8 966.7,275.4 982.2,274.1 997.6,271.7 1013.1,269.1 1028.6,266.7 1044.1,264.0 1059.5,261.4 1075.0,258.9 1075.0,262.2 1059.5,264.7 1043.9,267.3 1028.4,270.0 1012.9,272.4 997.4,275.1 981.8,277.7 966.3,279.1 950.8,280.6 935.2,282.8 919.7,285.0 904.2,287.1 888.7,289.5 848.1,291.8" fill="url(#r7)"/><polygon points="848.4,290.3 888.9,288.0 904.4,285.7 919.9,283.5 935.4,281.4 950.9,279.3 966.4,277.8 982.0,276.4 997.5,273.9 1013.0,271.2 1028.5,268.8 1044.0,266.1 1059.5,263.5 1075.0,261.0 1075.0,264.3 1059.4,266.8 1043.9,269.4 1028.3,272.1 1012.7,274.4 997.2,277.3 981.6,280.0 966.1,281.5 950.5,283.1 934.9,285.3 919.4,287.5 903.8,289.7 888.2,292.1 847.7,294.5" fill="url(#r8)"/><polygon points="847.9,293.0 888.5,290.6 904.0,288.3 919.6,286.1 935.1,283.9 950.6,281.7 966.2,280.2 981.7,278.7 997.3,276.1 1012.8,273.3 1028.4,270.9 1043.9,268.3 1059.5,265.6 1075.0,263.1 1075.0,266.5 1059.4,269.0 1043.8,271.6 1028.2,274.2 1012.6,276.5 997.0,279.6 981.4,282.3 965.8,283.9 950.2,285.6 934.6,287.8 919.0,290.1 903.4,292.3 887.8,294.7 847.2,297.1" fill="url(#r9)"/><polygon points="847.5,295.6 888.0,293.2 903.6,290.9 919.2,288.6 934.8,286.4 950.4,284.2 965.9,282.6 981.5,281.0 997.1,278.3 1012.7,275.4 1028.3,273.0 1043.8,270.4 1059.4,267.8 1075.0,265.3 1075.0,268.6 1059.4,271.1 1043.7,273.7 1028.1,276.3 1012.5,278.6 996.8,281.8 981.2,284.6 965.5,286.3 949.9,288.0 934.3,290.3 918.6,292.6 903.0,294.9 887.4,297.3 846.7,299.7" fill="url(#r10)"/><polygon points="847.0,298.3 887.6,295.9 903.2,293.4 918.8,291.2 934.5,288.9 950.1,286.7 965.7,285.0 981.3,283.3 996.9,280.5 1012.5,277.5 1028.2,275.1 1043.8,272.5 1059.4,269.9 1075.0,267.4 1075.0,270.7 1059.3,273.2 1043.7,275.8 1028.0,278.4 1012.3,280.7 996.6,284.0 981.0,286.9 965.3,288.7 949.6,290.5 934.0,292.8 918.3,295.2 902.6,297.5 886.9,299.9 846.3,302.4" fill="url(#r11)"/><polygon points="846.5,300.9 887.2,298.5 902.8,296.0 918.5,293.7 934.1,291.4 949.8,289.1 965.4,287.4 981.1,285.6 996.7,282.7 1012.4,279.5 1028.0,277.2 1043.7,274.6 1059.3,272.0 1075.0,269.5 1075.0,272.9 1059.3,275.3 1043.6,277.9 1027.9,280.5 1012.2,282.8 996.5,286.2 980.8,289.2 965.0,291.1 949.3,293.0 933.6,295.3 917.9,297.7 902.2,300.1 886.5,302.5 845.8,305.0" fill="url(#r12)"/><polygon points="846.1,303.5 886.7,301.1 902.4,298.6 918.1,296.3 933.8,293.9 949.5,291.6 965.2,289.8 980.9,288.0 996.6,284.9 1012.2,281.6 1027.9,279.3 1043.6,276.7 1059.3,274.1 1075.0,271.7 1075.0,275.0 1059.3,277.5 1043.5,280.0 1027.8,282.6 1012.0,284.9 996.3,288.4 980.5,291.6 964.8,293.5 949.0,295.4 933.3,297.9 917.6,300.3 901.8,302.7 886.1,305.1 845.3,307.6" fill="url(#r13)"/><polygon points="845.6,306.2 886.3,303.7 902.0,301.2 917.8,298.9 933.5,296.4 949.2,294.0 964.9,292.2 980.7,290.3 996.4,287.2 1012.1,283.7 1027.8,281.4 1043.6,278.8 1059.3,276.3 1075.0,273.8 1075.0,277.1 1059.2,279.6 1043.4,282.1 1027.7,284.7 1011.9,287.0 996.1,290.6 980.3,293.9 964.5,295.9 948.8,297.9 933.0,300.4 917.2,302.8 901.4,305.2 885.6,307.8 844.9,310.3" fill="url(#r14)"/><polygon points="845.1,308.8 885.9,306.3 901.6,303.8 917.4,301.4 933.2,299.0 948.9,296.5 964.7,294.6 980.4,292.6 996.2,289.4 1012.0,285.8 1027.7,283.5 1043.5,281.0 1059.2,278.4 1075.0,275.9 1075.0,279.3 1059.2,281.7 1043.4,284.3 1027.6,286.8 1011.7,289.1 995.9,292.8 980.1,296.2 964.3,298.3 948.5,300.4 932.7,302.9 916.8,305.4 901.0,307.8 885.2,310.4 844.4,312.9" fill="url(#r15)"/><polygon points="844.7,311.4 885.5,308.9 901.2,306.4 917.0,304.0 932.8,301.5 948.6,299.0 964.4,297.0 980.2,294.9 996.0,291.6 1011.8,287.9 1027.6,285.6 1043.4,283.1 1059.2,280.5 1075.0,278.1 1075.0,281.4 1059.1,283.8 1043.3,286.4 1027.4,288.9 1011.6,291.2 995.7,295.0 979.9,298.5 964.0,300.7 948.2,302.8 932.3,305.4 916.5,307.9 900.6,310.4 884.8,313.0 843.9,315.5" fill="url(#r16)"/><polygon points="844.2,314.1 885.0,311.5 900.9,309.0 916.7,306.5 932.5,304.0 948.3,301.4 964.2,299.4 980.0,297.2 995.8,293.8 1011.7,290.0 1027.5,287.8 1043.3,285.2 1059.2,282.7 1075.0,280.2 1075.0,283.5 1059.1,286.0 1043.2,288.5 1027.3,291.0 1011.4,293.2 995.6,297.2 979.7,300.8 963.8,303.1 947.9,305.3 932.0,307.9 916.1,310.5 900.2,313.0 884.3,315.6 843.5,318.2" fill="url(#r17)"/><polygon points="843.7,316.7 884.6,314.1 900.5,311.5 916.3,309.1 932.2,306.5 948.1,303.9 963.9,301.8 979.8,299.5 995.7,296.0 1011.5,292.1 1027.4,289.9 1043.3,287.3 1059.1,284.8 1075.0,282.3 1075.0,285.7 1059.1,288.1 1043.2,290.6 1027.2,293.1 1011.3,295.3 995.4,299.4 979.5,303.1 963.5,305.5 947.6,307.7 931.7,310.4 915.8,313.0 899.8,315.6 883.9,318.2 843.0,320.8" fill="url(#r18)"/><polygon points="843.3,319.3 884.2,316.7 900.1,314.1 916.0,311.6 931.9,309.0 947.8,306.4 963.7,304.2 979.6,301.8 995.5,298.2 1011.4,294.2 1027.3,292.0 1043.2,289.4 1059.1,286.9 1075.0,284.5 1075.0,287.8 1059.0,290.2 1043.1,292.7 1027.1,295.2 1011.2,297.4 995.2,301.7 979.2,305.4 963.3,307.9 947.3,310.2 931.4,312.9 915.4,315.6 899.4,318.2 883.5,320.8 842.5,323.5" fill="url(#r19)"/><polygon points="842.8,322.0 883.7,319.3 899.7,316.7 915.6,314.2 931.5,311.5 947.5,308.8 963.4,306.6 979.4,304.1 995.3,300.4 1011.2,296.3 1027.2,294.1 1043.1,291.5 1059.1,289.0 1075.0,286.6 1075.0,289.9 1059.0,292.4 1043.0,294.8 1027.0,297.4 1011.0,299.5 995.0,303.9 979.0,307.7 963.0,310.3 947.0,312.7 931.0,315.4 915.0,318.2 899.1,320.7 883.1,323.4 842.1,326.1" fill="url(#r20)"/><polygon points="842.3,324.6 883.3,322.0 899.3,319.3 915.2,316.7 931.2,314.0 947.2,311.3 963.2,309.0 979.1,306.4 995.1,302.6 1011.1,298.3 1027.1,296.2 1043.0,293.7 1059.0,291.2 1075.0,288.8 1075.0,292.1 1059.0,294.5 1042.9,297.0 1026.9,299.5 1010.9,301.6 994.8,306.1 978.8,310.0 962.8,312.7 946.7,315.1 930.7,317.9 914.7,320.7 898.7,323.3 882.6,326.0 841.6,328.7" fill="url(#r21)"/><polygon points="841.9,327.2 882.9,324.6 898.9,321.9 914.9,319.3 930.9,316.5 946.9,313.8 962.9,311.4 978.9,308.7 994.9,304.8 1011.0,300.4 1027.0,298.3 1043.0,295.8 1059.0,293.3 1075.0,290.9 1075.0,294.2 1058.9,296.6 1042.9,299.1 1026.8,301.6 1010.7,303.7 994.7,308.3 978.6,312.3 962.5,315.1 946.5,317.6 930.4,320.4 914.3,323.3 898.3,325.9 882.2,328.6 841.1,331.4" fill="url(#r22)"/><polygon points="841.4,329.9 882.4,327.2 898.5,324.5 914.5,321.8 930.6,319.0 946.6,316.2 962.7,313.8 978.7,311.0 994.8,307.0 1010.8,302.5 1026.9,300.4 1042.9,297.9 1059.0,295.4 1075.0,293.0 1075.0,296.4 1058.9,298.7 1042.8,301.2 1026.7,303.7 1010.6,305.8 994.5,310.5 978.4,314.6 962.3,317.5 946.2,320.1 930.1,322.9 914.0,325.8 897.9,328.5 881.8,331.2 840.7,334.0" fill="url(#r23)"/><polygon points="840.9,332.5 882.0,329.8 898.1,327.1 914.2,324.4 930.3,321.5 946.3,318.7 962.4,316.2 978.5,313.3 994.6,309.3 1010.7,304.6 1026.8,302.5 1042.8,300.0 1058.9,297.5 1075.0,295.2 1075.0,298.5 1058.9,300.9 1042.7,303.3 1026.6,305.8 1010.4,307.9 994.3,312.7 978.2,316.9 962.0,319.9 945.9,322.5 929.7,325.4 913.6,328.4 897.5,331.1 881.3,333.9 840.2,336.6" fill="url(#r24)"/><polygon points="840.5,335.2 881.6,332.4 897.7,329.6 913.8,326.9 929.9,324.0 946.0,321.1 962.2,318.6 978.3,315.6 994.4,311.5 1010.5,306.7 1026.6,304.6 1042.8,302.1 1058.9,299.7 1075.0,297.3 1075.0,300.6 1058.8,303.0 1042.6,305.4 1026.5,307.9 1010.3,310.0 994.1,314.9 977.9,319.2 961.8,322.3 945.6,325.0 929.4,328.0 913.2,330.9 897.1,333.7 880.9,336.5 839.7,339.3" fill="url(#r25)"/><polygon points="840.0,337.8 881.1,335.0 897.3,332.2 913.5,329.5 929.6,326.5 945.8,323.6 961.9,321.0 978.1,318.0 994.2,313.7 1010.4,308.8 1026.5,306.7 1042.7,304.2 1058.8,301.8 1075.0,299.4 1075.0,302.8 1058.8,305.1 1042.6,307.5 1026.4,310.0 1010.2,312.0 993.9,317.1 977.7,321.6 961.5,324.7 945.3,327.5 929.1,330.5 912.9,333.5 896.7,336.3 880.5,339.1 839.3,341.9" fill="url(#r26)"/><polygon points="839.5,340.4 880.7,337.6 896.9,334.8 913.1,332.0 929.3,329.1 945.5,326.1 961.7,323.4 977.9,320.3 994.0,315.9 1010.2,310.9 1026.4,308.8 1042.6,306.4 1058.8,303.9 1075.0,301.6 1075.0,304.9 1058.8,307.2 1042.5,309.7 1026.3,312.1 1010.0,314.1 993.8,319.3 977.5,323.9 961.3,327.1 945.0,329.9 928.8,333.0 912.5,336.0 896.3,338.8 880.0,341.7 838.8,344.5" fill="url(#r27)"/><polygon points="839.1,343.1 880.3,340.2 896.5,337.4 912.7,334.6 929.0,331.6 945.2,328.5 961.4,325.8 977.6,322.6 993.9,318.1 1010.1,313.0 1026.3,310.9 1042.5,308.5 1058.8,306.0 1075.0,303.7 1075.0,307.0 1058.7,309.4 1042.4,311.8 1026.2,314.2 1009.9,316.2 993.6,321.5 977.3,326.2 961.0,329.5 944.7,332.4 928.5,335.5 912.2,338.6 895.9,341.4 879.6,344.3 838.3,347.2" fill="url(#r28)"/><polygon points="838.6,345.7 879.8,342.8 896.1,340.0 912.4,337.1 928.6,334.1 944.9,331.0 961.2,328.2 977.4,324.9 993.7,320.3 1009.9,315.1 1026.2,313.0 1042.5,310.6 1058.7,308.2 1075.0,305.8 1075.0,309.2 1058.7,311.5 1042.4,313.9 1026.0,316.3 1009.7,318.3 993.4,323.8 977.1,328.5 960.8,331.9 944.4,334.8 928.1,338.0 911.8,341.1 895.5,344.0 879.2,346.9 837.9,349.8" fill="url(#r29)"/><polygon points="838.1,348.3 879.4,345.5 895.7,342.6 912.0,339.7 928.3,336.6 944.6,333.5 960.9,330.6 977.2,327.2 993.5,322.5 1009.8,317.1 1026.1,315.1 1042.4,312.7 1058.7,310.3 1075.0,308.0 1075.0,311.3 1058.6,313.6 1042.3,316.0 1025.9,318.4 1009.6,320.4 993.2,326.0 976.9,330.8 960.5,334.3 944.2,337.3 927.8,340.5 911.5,343.7 895.1,346.6 878.7,349.5 837.4,352.4" fill="url(#r30)"/><polygon points="837.6,351.0 879.0,348.1 895.3,345.2 911.7,342.3 928.0,339.1 944.3,335.9 960.7,333.0 977.0,329.5 993.3,324.7 1009.7,319.2 1026.0,317.2 1042.3,314.8 1058.7,312.4 1075.0,310.1 1075.0,313.4 1058.6,315.7 1042.2,318.1 1025.8,320.5 1009.4,322.5 993.0,328.2 976.7,333.1 960.3,336.7 943.9,339.8 927.5,343.0 911.1,346.2 894.7,349.2 878.3,352.1 836.9,355.1" fill="url(#r31)"/><polygon points="837.2,353.6 878.6,350.7 894.9,347.7 911.3,344.8 927.7,341.6 944.0,338.4 960.4,335.4 976.8,331.8 993.1,326.9 1009.5,321.3 1025.9,319.3 1042.3,316.9 1058.6,314.6 1075.0,312.2 1075.0,315.6 1058.6,317.9 1042.1,320.2 1025.7,322.6 1009.3,324.6 992.9,330.4 976.4,335.4 960.0,339.1 943.6,342.2 927.2,345.5 910.7,348.8 894.3,351.8 877.9,354.7 836.5,357.7" fill="url(#r32)"/><polygon points="836.7,356.2 878.1,353.3 894.5,350.3 910.9,347.4 927.3,344.1 943.7,340.9 960.2,337.8 976.6,334.1 993.0,329.1 1009.4,323.4 1025.8,321.4 1042.2,319.0 1058.6,316.7 1075.0,314.4 1075.0,317.7 1058.5,320.0 1042.1,322.4 1025.6,324.7 1009.1,326.7 992.7,332.6 976.2,337.7 959.8,341.5 943.3,344.7 926.8,348.0 910.4,351.3 893.9,354.4 877.4,357.4 836.0,360.4" fill="url(#r33)"/><polygon points="836.2,358.9 877.7,355.9 894.1,352.9 910.6,349.9 927.0,346.6 943.5,343.3 959.9,340.2 976.3,336.4 992.8,331.4 1009.2,325.5 1025.7,323.5 1042.1,321.2 1058.6,318.8 1075.0,316.5 1075.0,319.8 1058.5,322.1 1042.0,324.5 1025.5,326.8 1009.0,328.8 992.5,334.8 976.0,340.0 959.5,343.9 943.0,347.2 926.5,350.5 910.0,353.9 893.5,356.9 877.0,360.0 835.5,363.0" fill="url(#r34)"/><polygon points="835.8,361.5 877.3,358.5 893.7,355.5 910.2,352.5 926.7,349.1 943.2,345.8 959.7,342.6 976.1,338.7 992.6,333.6 1009.1,327.6 1025.6,325.6 1042.0,323.3 1058.5,320.9 1075.0,318.7 1075.0,322.0 1058.5,324.3 1041.9,326.6 1025.4,328.9 1008.9,330.8 992.3,337.0 975.8,342.3 959.3,346.3 942.7,349.6 926.2,353.0 909.7,356.5 893.1,359.5 876.6,362.6 835.1,365.6" fill="url(#r35)"/><polygon points="835.3,364.1 876.8,361.1 893.3,358.1 909.9,355.0 926.4,351.6 942.9,348.2 959.4,345.0 975.9,341.0 992.4,335.8 1008.9,329.7 1025.5,327.7 1042.0,325.4 1058.5,323.1 1075.0,320.8 1075.0,324.1 1058.4,326.4 1041.9,328.7 1025.3,331.0 1008.7,332.9 992.1,339.2 975.6,344.6 959.0,348.7 942.4,352.1 925.9,355.5 909.3,359.0 892.7,362.1 876.2,365.2 834.6,368.3" fill="url(#r36)"/><polygon points="834.8,366.8 876.4,363.7 892.9,360.7 909.5,357.6 926.0,354.1 942.6,350.7 959.1,347.4 975.7,343.3 992.2,338.0 1008.8,331.8 1025.3,329.9 1041.9,327.5 1058.4,325.2 1075.0,322.9 1075.0,326.3 1058.4,328.5 1041.8,330.8 1025.2,333.1 1008.6,335.0 992.0,341.4 975.4,346.9 958.8,351.1 942.1,354.6 925.5,358.1 908.9,361.6 892.3,364.7 875.7,367.8 834.1,370.9" fill="url(#r37)"/><polygon points="834.4,369.4 876.0,366.3 892.6,363.2 909.1,360.1 925.7,356.7 942.3,353.2 958.9,349.8 975.5,345.6 992.1,340.2 1008.7,333.9 1025.2,332.0 1041.8,329.6 1058.4,327.3 1075.0,325.1 1075.0,328.4 1058.4,330.6 1041.7,332.9 1025.1,335.2 1008.4,337.1 991.8,343.6 975.1,349.2 958.5,353.5 941.9,357.0 925.2,360.6 908.6,364.1 891.9,367.3 875.3,370.4 833.7,373.5" fill="url(#r38)"/><polygon points="833.9,372.1 875.5,368.9 892.2,365.8 908.8,362.7 925.4,359.2 942.0,355.6 958.6,352.2 975.3,347.9 991.9,342.4 1008.5,335.9 1025.1,334.1 1041.8,331.7 1058.4,329.4 1075.0,327.2 1075.0,330.5 1058.3,332.8 1041.6,335.0 1025.0,337.3 1008.3,339.2 991.6,345.9 974.9,351.5 958.3,355.9 941.6,359.5 924.9,363.1 908.2,366.7 891.5,369.9 874.9,373.0 833.2,376.2" fill="url(#r39)"/><polygon points="833.4,374.7 875.1,371.6 891.8,368.4 908.4,365.2 925.1,361.7 941.7,358.1 958.4,354.6 975.1,350.3 991.7,344.6 1008.4,338.0 1025.0,336.2 1041.7,333.9 1058.3,331.6 1075.0,329.3 1075.0,332.7 1058.3,334.9 1041.6,337.2 1024.9,339.5 1008.1,341.3 991.4,348.1 974.7,353.9 958.0,358.3 941.3,361.9 924.6,365.6 907.9,369.2 891.1,372.5 874.4,375.6 832.7,378.8" fill="url(#r40)"/><polygon points="833.0,377.3 874.7,374.2 891.4,371.0 908.1,367.8 924.8,364.2 941.4,360.6 958.1,357.0 974.8,352.6 991.5,346.8 1008.2,340.1 1024.9,338.3 1041.6,336.0 1058.3,333.7 1075.0,331.5 1075.0,334.8 1058.2,337.0 1041.5,339.3 1024.7,341.6 1008.0,343.4 991.2,350.3 974.5,356.2 957.7,360.7 941.0,364.4 924.2,368.1 907.5,371.8 890.7,375.0 874.0,378.2 832.2,381.4" fill="url(#r41)"/><polygon points="832.5,380.0 874.2,376.8 891.0,373.6 907.7,370.3 924.4,366.7 941.2,363.0 957.9,359.4 974.6,354.9 991.4,349.0 1008.1,342.2 1024.8,340.4 1041.5,338.1 1058.3,335.8 1075.0,333.6 1075.0,336.9 1058.2,339.1 1041.4,341.4 1024.6,343.7 1007.9,345.5 991.1,352.5 974.3,358.5 957.5,363.1 940.7,366.9 923.9,370.6 907.1,374.3 890.4,377.6 873.6,380.8 831.8,384.1" fill="url(#r42)"/><polygon points="832.0,382.6 873.8,379.4 890.6,376.2 907.3,372.9 924.1,369.2 940.9,365.5 957.6,361.8 974.4,357.2 991.2,351.2 1007.9,344.3 1024.7,342.5 1041.5,340.2 1058.2,337.9 1075.0,335.7 1075.0,339.1 1058.2,341.3 1041.4,343.5 1024.5,345.8 1007.7,347.6 990.9,354.7 974.1,360.8 957.2,365.5 940.4,369.3 923.6,373.1 906.8,376.9 890.0,380.2 873.1,383.5 831.3,386.7" fill="url(#r43)"/><polygon points="831.6,385.2 873.4,382.0 890.2,378.8 907.0,375.4 923.8,371.7 940.6,368.0 957.4,364.2 974.2,359.5 991.0,353.5 1007.8,346.4 1024.6,344.6 1041.4,342.3 1058.2,340.1 1075.0,337.9 1075.0,341.2 1058.1,343.4 1041.3,345.6 1024.4,347.9 1007.6,349.6 990.7,356.9 973.9,363.1 957.0,367.9 940.1,371.8 923.3,375.6 906.4,379.4 889.6,382.8 872.7,386.1 830.8,389.3" fill="url(#r44)"/><polygon points="831.1,387.9 872.9,384.6 889.8,381.3 906.6,378.0 923.5,374.2 940.3,370.4 957.1,366.6 974.0,361.8 990.8,355.7 1007.6,348.5 1024.5,346.7 1041.3,344.4 1058.2,342.2 1075.0,340.0 1075.0,343.3 1058.1,345.5 1041.2,347.7 1024.3,350.0 1007.4,351.7 990.5,359.1 973.6,365.4 956.7,370.3 939.8,374.3 923.0,378.1 906.1,382.0 889.2,385.4 872.3,388.7 830.4,392.0" fill="url(#r45)"/><polygon points="830.6,390.5 872.5,387.2 889.4,383.9 906.3,380.6 923.1,376.7 940.0,372.9 956.9,369.0 973.8,364.1 990.6,357.9 1007.5,350.6 1024.4,348.8 1041.3,346.6 1058.1,344.3 1075.0,342.1 1075.0,345.5 1058.1,347.6 1041.1,349.9 1024.2,352.1 1007.3,353.8 990.4,361.3 973.4,367.7 956.5,372.7 939.6,376.7 922.6,380.6 905.7,384.5 888.8,388.0 871.8,391.3 829.9,394.6" fill="url(#r46)"/><polygon points="830.2,393.1 872.1,389.8 889.0,386.5 905.9,383.1 922.8,379.2 939.7,375.3 956.6,371.4 973.5,366.4 990.5,360.1 1007.4,352.7 1024.3,350.9 1041.2,348.7 1058.1,346.5 1075.0,344.3 1075.0,347.6 1058.0,349.8 1041.1,352.0 1024.1,354.2 1007.1,355.9 990.2,363.5 973.2,370.0 956.2,375.1 939.3,379.2 922.3,383.1 905.3,387.1 888.4,390.6 871.4,393.9 829.4,397.3" fill="url(#r47)"/><polygon points="829.7,395.8 871.7,392.4 888.6,389.1 905.5,385.7 922.5,381.7 939.4,377.8 956.4,373.8 973.3,368.7 990.3,362.3 1007.2,354.7 1024.2,353.0 1041.1,350.8 1058.1,348.6 1075.0,346.4 1075.0,349.7 1058.0,351.9 1041.0,354.1 1024.0,356.3 1007.0,358.0 990.0,365.7 973.0,372.3 956.0,377.5 939.0,381.7 922.0,385.6 905.0,389.6 888.0,393.1 871.0,396.5 829.0,399.9" fill="url(#r48)"/><polygon points="829.2,398.4 871.2,395.0 888.2,391.7 905.2,388.2 922.2,384.2 939.1,380.3 956.1,376.2 973.1,371.0 990.1,364.5 1007.1,356.8 1024.1,355.1 1041.0,352.9 1058.0,350.7 1075.0,348.6 1075.0,351.9 1058.0,354.0 1040.9,356.2 1023.9,358.4 1006.8,360.1 989.8,368.0 972.8,374.6 955.7,379.9 938.7,384.1 921.7,388.2 904.6,392.2 887.6,395.7 870.5,399.1 828.5,402.5" fill="url(#r49)"/><polygon points="828.8,401.0 870.8,397.7 887.8,394.3 904.8,390.8 921.8,386.8 938.9,382.7 955.9,378.6 972.9,373.3 989.9,366.7 1006.9,358.9 1023.9,357.2 1041.0,355.0 1058.0,352.8 1075.0,350.7 1075.0,354.0 1057.9,356.2 1040.9,358.3 1023.8,360.5 1006.7,362.2 989.6,370.2 972.6,376.9 955.5,382.3 938.4,386.6 921.3,390.7 904.3,394.7 887.2,398.3 870.1,401.7 828.0,405.2" fill="url(#r50)"/><polygon points="828.3,403.7 870.4,400.3 887.4,396.9 904.5,393.3 921.5,389.3 938.6,385.2 955.6,381.0 972.7,375.6 989.7,368.9 1006.8,361.0 1023.8,359.3 1040.9,357.1 1057.9,355.0 1075.0,352.8 1075.0,356.2 1057.9,358.3 1040.8,360.4 1023.7,362.6 1006.6,364.3 989.5,372.4 972.3,379.2 955.2,384.7 938.1,389.0 921.0,393.2 903.9,397.3 886.8,400.9 869.7,404.3 827.6,407.8" fill="url(#r51)"/><polygon points="827.8,406.3 869.9,402.9 887.0,399.4 904.1,395.9 921.2,391.8 938.3,387.7 955.4,383.4 972.5,377.9 989.6,371.1 1006.6,363.1 1023.7,361.4 1040.8,359.3 1057.9,357.1 1075.0,355.0 1075.0,358.3 1057.9,360.4 1040.7,362.6 1023.6,364.7 1006.4,366.4 989.3,374.6 972.1,381.5 955.0,387.1 937.8,391.5 920.7,395.7 903.5,399.9 886.4,403.5 869.3,407.0 827.1,410.4" fill="url(#r52)"/><polygon points="827.4,409.0 869.5,405.5 886.6,402.0 903.7,398.4 920.9,394.3 938.0,390.1 955.1,385.8 972.2,380.3 989.4,373.4 1006.5,365.2 1023.6,363.5 1040.7,361.4 1057.9,359.2 1075.0,357.1 1075.0,360.4 1057.8,362.5 1040.6,364.7 1023.5,366.8 1006.3,368.4 989.1,376.8 971.9,383.9 954.7,389.5 937.5,394.0 920.4,398.2 903.2,402.4 886.0,406.1 868.8,409.6 826.6,413.1" fill="url(#r53)"/><polygon points="826.9,411.6 869.1,408.1 886.2,404.6 903.4,401.0 920.5,396.8 937.7,392.6 954.9,388.2 972.0,382.6 989.2,375.6 1006.4,367.3 1023.5,365.6 1040.7,363.5 1057.8,361.3 1075.0,359.2 1075.0,362.6 1057.8,364.7 1040.6,366.8 1023.3,368.9 1006.1,370.5 988.9,379.0 971.7,386.2 954.5,391.9 937.3,396.4 920.0,400.7 902.8,405.0 885.6,408.6 868.4,412.2 826.2,415.7" fill="url(#r54)"/><polygon points="826.4,414.2 868.6,410.7 885.8,407.2 903.0,403.5 920.2,399.3 937.4,395.1 954.6,390.6 971.8,384.9 989.0,377.8 1006.2,369.4 1023.4,367.7 1040.6,365.6 1057.8,363.5 1075.0,361.4 1075.0,364.7 1057.7,366.8 1040.5,368.9 1023.2,371.0 1006.0,372.6 988.7,381.2 971.5,388.5 954.2,394.3 937.0,398.9 919.7,403.2 902.5,407.5 885.2,411.2 868.0,414.8 825.7,418.3" fill="url(#r55)"/><polygon points="826.0,416.9 868.2,413.3 885.4,409.8 902.7,406.1 919.9,401.8 937.1,397.5 954.4,393.0 971.6,387.2 988.8,380.0 1006.1,371.5 1023.3,369.8 1040.5,367.7 1057.8,365.6 1075.0,363.5 1075.0,366.8 1057.7,368.9 1040.4,371.0 1023.1,373.1 1005.8,374.7 988.6,383.4 971.3,390.8 954.0,396.7 936.7,401.4 919.4,405.7 902.1,410.1 884.8,413.8 867.5,417.4 825.2,421.0" fill="url(#r56)"/><polygon points="825.5,419.5 867.8,415.9 885.0,412.4 902.3,408.6 919.6,404.3 936.8,400.0 954.1,395.4 971.4,389.5 988.7,382.2 1005.9,373.5 1023.2,372.0 1040.5,369.8 1057.7,367.7 1075.0,365.6 1075.0,369.0 1057.7,371.0 1040.3,373.1 1023.0,375.2 1005.7,376.8 988.4,385.6 971.0,393.1 953.7,399.1 936.4,403.8 919.1,408.2 901.7,412.6 884.4,416.4 867.1,420.0 824.8,423.6" fill="url(#r57)"/><polygon points="825.0,422.1 867.3,418.5 884.6,415.0 902.0,411.2 919.3,406.8 936.6,402.5 953.9,397.8 971.2,391.8 988.5,384.4 1005.8,375.6 1023.1,374.1 1040.4,372.0 1057.7,369.9 1075.0,367.8 1075.0,371.1 1057.6,373.2 1040.3,375.3 1022.9,377.3 1005.6,378.9 988.2,387.9 970.8,395.4 953.5,401.5 936.1,406.3 918.8,410.7 901.4,415.2 884.0,419.0 866.7,422.6 824.3,426.2" fill="url(#r58)"/><polygon points="824.6,424.8 866.9,421.2 884.3,417.5 901.6,413.7 918.9,409.3 936.3,404.9 953.6,400.2 971.0,394.1 988.3,386.6 1005.6,377.7 1023.0,376.2 1040.3,374.1 1057.7,372.0 1075.0,369.9 1075.0,373.2 1057.6,375.3 1040.2,377.4 1022.8,379.4 1005.4,381.0 988.0,390.1 970.6,397.7 953.2,403.9 935.8,408.8 918.4,413.2 901.0,417.7 883.6,421.6 866.2,425.2 823.8,428.9" fill="url(#r59)"/><polygon points="824.1,427.4 866.5,423.8 883.9,420.1 901.2,416.3 918.6,411.8 936.0,407.4 953.4,402.6 970.7,396.4 988.1,388.8 1005.5,379.8 1022.9,378.3 1040.2,376.2 1057.6,374.1 1075.0,372.0 1075.0,375.4 1057.6,377.4 1040.1,379.5 1022.7,381.5 1005.3,383.1 987.8,392.3 970.4,400.0 953.0,406.3 935.5,411.2 918.1,415.8 900.7,420.3 883.2,424.2 865.8,427.8 823.4,431.5" fill="url(#r60)"/><polygon points="823.6,430.0 866.0,426.4 883.5,422.7 900.9,418.8 918.3,414.3 935.7,409.8 953.1,405.0 970.5,398.7 987.9,391.0 1005.3,381.9 1022.8,380.4 1040.2,378.3 1057.6,376.2 1075.0,374.2 1075.0,377.5 1057.5,379.5 1040.1,381.6 1022.6,383.7 1005.1,385.2 987.7,394.5 970.2,402.3 952.7,408.7 935.3,413.7 917.8,418.3 900.3,422.8 882.8,426.7 865.4,430.4 822.9,434.2" fill="url(#r61)"/><polygon points="823.2,432.7 865.6,429.0 883.1,425.3 900.5,421.4 918.0,416.9 935.4,412.3 952.9,407.4 970.3,401.0 987.8,393.2 1005.2,384.0 1022.7,382.5 1040.1,380.4 1057.6,378.4 1075.0,376.3 1075.0,379.6 1057.5,381.7 1040.0,383.7 1022.5,385.8 1005.0,387.2 987.5,396.7 970.0,404.6 952.5,411.1 935.0,416.1 917.5,420.8 900.0,425.4 882.4,429.3 864.9,433.1 822.4,436.8" fill="url(#r62)"/><polygon points="822.7,435.3 865.2,431.6 882.7,427.9 900.2,424.0 917.6,419.4 935.1,414.8 952.6,409.8 970.1,403.3 987.6,395.5 1005.1,386.1 1022.5,384.6 1040.0,382.5 1057.5,380.5 1075.0,378.5 1075.0,381.8 1057.5,383.8 1039.9,385.8 1022.4,387.9 1004.8,389.3 987.3,398.9 969.8,406.9 952.2,413.5 934.7,418.6 917.1,423.3 899.6,427.9 882.1,431.9 864.5,435.7 822.0,439.4" fill="url(#r63)"/><polygon points="822.2,437.9 864.8,434.2 882.3,430.5 899.8,426.5 917.3,421.9 934.8,417.2 952.4,412.2 969.9,405.6 987.4,397.7 1004.9,388.2 1022.4,386.7 1040.0,384.6 1057.5,382.6 1075.0,380.6 1075.0,383.9 1057.4,385.9 1039.8,387.9 1022.3,390.0 1004.7,391.4 987.1,401.1 969.5,409.2 952.0,415.9 934.4,421.1 916.8,425.8 899.2,430.5 881.7,434.5 864.1,438.3 821.5,442.1" fill="url(#r64)"/><polygon points="821.8,440.6 864.3,436.8 881.9,433.1 899.4,429.1 917.0,424.4 934.5,419.7 952.1,414.6 969.7,407.9 987.2,399.9 1004.8,390.3 1022.3,388.8 1039.9,386.8 1057.4,384.7 1075.0,382.7 1075.0,386.1 1057.4,388.1 1039.8,390.1 1022.2,392.1 1004.6,393.5 986.9,403.3 969.3,411.5 951.7,418.3 934.1,423.5 916.5,428.3 898.9,433.0 881.3,437.1 863.7,440.9 821.0,444.7" fill="url(#r65)"/><polygon points="821.3,443.2 863.9,439.4 881.5,435.6 899.1,431.6 916.7,426.9 934.3,422.2 951.9,417.0 969.4,410.2 987.0,402.1 1004.6,392.3 1022.2,390.9 1039.8,388.9 1057.4,386.9 1075.0,384.9 1075.0,388.2 1057.4,390.2 1039.7,392.2 1022.1,394.2 1004.4,395.6 986.8,405.5 969.1,413.8 951.5,420.7 933.8,426.0 916.2,430.8 898.5,435.6 880.9,439.7 863.2,443.5 820.6,447.3" fill="url(#r66)"/><polygon points="820.8,445.9 863.5,442.0 881.1,438.2 898.7,434.2 916.3,429.4 934.0,424.6 951.6,419.4 969.2,412.6 986.9,404.3 1004.5,394.4 1022.1,393.0 1039.7,391.0 1057.4,389.0 1075.0,387.0 1075.0,390.3 1057.3,392.3 1039.6,394.3 1021.9,396.3 1004.3,397.7 986.6,407.7 968.9,416.2 951.2,423.1 933.5,428.5 915.8,433.3 898.2,438.2 880.5,442.3 862.8,446.1 820.1,450.0" fill="url(#r67)"/><polygon points="820.4,448.5 863.0,444.6 880.7,440.8 898.4,436.7 916.0,431.9 933.7,427.1 951.4,421.8 969.0,414.9 986.7,406.5 1004.3,396.5 1022.0,395.1 1039.7,393.1 1057.3,391.1 1075.0,389.1 1075.0,392.5 1057.3,394.4 1039.6,396.4 1021.8,398.4 1004.1,399.8 986.4,410.0 968.7,418.5 951.0,425.5 933.2,430.9 915.5,435.8 897.8,440.7 880.1,444.8 862.4,448.7 819.6,452.6" fill="url(#r68)"/><polygon points="819.9,451.1 862.6,447.3 880.3,443.4 898.0,439.3 915.7,434.4 933.4,429.6 951.1,424.2 968.8,417.2 986.5,408.7 1004.2,398.6 1021.9,397.2 1039.6,395.2 1057.3,393.2 1075.0,391.3 1075.0,397.0 1057.2,398.9 1039.4,400.9 1021.6,402.9 1003.8,404.2 986.0,414.6 968.2,423.4 950.4,430.6 932.6,436.2 914.8,441.1 897.0,446.1 879.2,450.3 861.4,454.3 818.6,458.2" fill="url(#r69)"/></g>
<path d="M869,339 L925,328 L983,314.4 L1030,311 L1075,307" stroke="#4a7a88" stroke-width="1.8" fill="none" opacity="0.85"/>
<path d="M970.7,259.9 L977.8,300.3 L983,314.4" stroke="#2c5a60" stroke-width="1.8" fill="none" opacity="0.9"/>
<path d="M983,314.4 L993.6,363.6 L1004,399" stroke="#707a88" stroke-width="2" fill="none" opacity="0.8"/>
<path d="M983,314.4 L993.6,363.6 L1004,399" stroke="#e0e8f0" stroke-width="1" stroke-dasharray="1.5 1.2" fill="none"/>
<path d="M1056.8,247.6 L1067,272" stroke="#d0e0e8" stroke-width="1.2" fill="none"/>
<path d="M877,270.3 L912.7,265.3 L965.4,259.1" stroke="#d89a00" stroke-width="1" fill="none" opacity="0.5"/>
</svg><!--/3D-->
<div class="t" style="left:1003px;top:127px;font-size:13px;color:#000;-webkit-text-stroke:0.22px #000">Measurement</div>
<!-- grid -->
<div id="grid">
<div class="a" style="left:3px;top:143px;width:704px;height:217px;border:1px solid #a0a0a0;background:#fff"></div>
<div class="g" style="left:10.5px;top:150.1px">Evaluation</div>
<div class="g" style="left:140.2px;top:150.1px">Region / Profile</div>
<div class="g" style="left:264.8px;top:150.1px">Nominal Value</div>
<div class="g" style="left:392px;top:150.1px">Value</div>
<div class="g" style="left:517px;top:150.1px">Pass 7/8</div>
<div class="a" style="left:4px;top:169px;width:702px;height:24px;background:#3399ff;border-top:1px solid #4a90d8;border-bottom:1px solid #4090e0"></div>
<div class="g" style="left:29.8px;top:174.6px;color:#eaf4ff">Flatness</div>
<div class="g" style="left:138.6px;top:174.6px;color:#eaf4ff">Top</div>
<div class="g" style="left:262.8px;top:174.6px;color:#eaf4ff">0.00 µm</div>
<div class="g" style="left:390.6px;top:174.6px;color:#eaf4ff">6.10 µm</div>
<svg class="a" style="left:5px;top:174px" width="18" height="14" viewBox="0 0 18 14"><path d="M7.6 3.2H15.6L10.7 10.9H2.7Z" fill="#5aa8f0" stroke="#0a1a5a" stroke-width="1.5" stroke-linejoin="miter"/></svg>
<svg class="a" style="left:600px;top:175px" width="19" height="15" viewBox="0 0 19 15"><path d="M3 7.2L7.9 11.8L15.8 2" stroke="#18722a" stroke-width="2.6" fill="none"/></svg>
<div class="hl" style="left:4px;top:216px;width:702px"></div>
<div class="g" style="left:29.8px;top:198.6px;color:#1c1c1c">Step-Height</div>
<div class="g" style="left:138.6px;top:198.6px;color:#1c1c1c">Bottom -> Top</div>
<div class="g" style="left:262.8px;top:198.6px;color:#1c1c1c">16000.00 µm</div>
<div class="g" style="left:390.6px;top:198.6px;color:#1c1c1c">15981.86 µm</div>
<svg class="a" style="left:4px;top:197px" width="20" height="17" viewBox="0 0 20 17"><path d="M4.5 1.5H19M1.5 15.5H17" stroke="#101840" stroke-width="1.3"/><path d="M9.5 3.5V13.5" stroke="#601020" stroke-width="1.8"/><path d="M6.8 6.4L9.5 2.6L12.2 6.4ZM6.8 10.6L9.5 14.4L12.2 10.6Z" fill="#601020"/></svg>
<svg class="a" style="left:600px;top:199px" width="19" height="15" viewBox="0 0 19 15"><path d="M3 7.2L7.9 11.8L15.8 2" stroke="#18722a" stroke-width="2.6" fill="none"/></svg>
<div class="hl" style="left:4px;top:240px;width:702px"></div>
<div class="g" style="left:29.8px;top:222.6px;color:#1c1c1c">Step-Height</div>
<div class="g" style="left:138.6px;top:222.6px;color:#1c1c1c">Bottom -> Middle</div>
<div class="g" style="left:262.8px;top:222.6px;color:#1c1c1c">7500.00 µm</div>
<div class="g" style="left:390.6px;top:222.6px;color:#1c1c1c">7674.20 µm</div>
<svg class="a" style="left:4px;top:221px" width="20" height="17" viewBox="0 0 20 17"><path d="M4.5 1.5H19M1.5 15.5H17" stroke="#101840" stroke-width="1.3"/><path d="M9.5 3.5V13.5" stroke="#601020" stroke-width="1.8"/><path d="M6.8 6.4L9.5 2.6L12.2 6.4ZM6.8 10.6L9.5 14.4L12.2 10.6Z" fill="#601020"/></svg>
<svg class="a" style="left:600px;top:223px" width="19" height="15" viewBox="0 0 19 15"><path d="M3 7.2L7.9 11.8L15.8 2" stroke="#18722a" stroke-width="2.6" fill="none"/></svg>
<div class="hl" style="left:4px;top:264px;width:702px"></div>
<div class="g" style="left:29.8px;top:246.6px;color:#1c1c1c">Parallelism</div>
<div class="g" style="left:138.6px;top:246.6px;color:#1c1c1c">Bottom -> Top</div>
<div class="g" style="left:262.8px;top:246.6px;color:#1c1c1c">30.00 µm</div>
<div class="g" style="left:390.6px;top:246.6px;color:#1c1c1c">28.95 µm</div>
<svg class="a" style="left:5px;top:245px" width="18" height="16" viewBox="0 0 18 16"><path d="M2.4 14.5L11.3 2.2M6.9 14.5L15.7 2.2" stroke="#1a1a1a" stroke-width="1.3"/></svg>
<svg class="a" style="left:600px;top:247px" width="19" height="15" viewBox="0 0 19 15"><path d="M3 7.2L7.9 11.8L15.8 2" stroke="#18722a" stroke-width="2.6" fill="none"/></svg>
<div class="hl" style="left:4px;top:288px;width:702px"></div>
<div class="g" style="left:29.8px;top:270.6px;color:#1c1c1c">Pt</div>
<div class="g" style="left:138.6px;top:270.6px;color:#1c1c1c">Top</div>
<div class="g" style="left:262.8px;top:270.6px;color:#1c1c1c">0.00 µm</div>
<div class="g" style="left:390.6px;top:270.6px;color:#1c1c1c">6.32 µm</div>
<svg class="a" style="left:5px;top:269px" width="18" height="16" viewBox="0 0 18 16"><path d="M3.5 15C1.5 10 1.5 3 6.5 2C10 1.3 12.5 3 13.5 5.5C15 8 16 9.5 17 11C13.5 9.5 9 9.5 3.5 15Z" fill="#101018"/><path d="M3.5 10.5C2.5 6 3.5 3 6.8 2.8C9.5 2.5 11.5 4 12.5 6C9.5 6 6 7.5 3.5 10.5Z" fill="#b01838"/><path d="M4.5 13.2C4 11.5 4 10.8 4.5 10C7.5 7.5 10.5 6.8 13 7C14 8.2 14.5 9 15 9.8C11 9 8 10 4.5 13.2Z" fill="#2ac04a"/></svg>
<svg class="a" style="left:600px;top:271px" width="19" height="15" viewBox="0 0 19 15"><path d="M3 7.2L7.9 11.8L15.8 2" stroke="#18722a" stroke-width="2.6" fill="none"/></svg>
<div class="hl" style="left:4px;top:312px;width:702px"></div>
<div class="g" style="left:29.8px;top:294.6px;color:#1c1c1c">Sa</div>
<div class="g" style="left:138.6px;top:294.6px;color:#1c1c1c">Top</div>
<div class="g" style="left:262.8px;top:294.6px;color:#1c1c1c">0.00 µm</div>
<div class="g" style="left:390.6px;top:294.6px;color:#1c1c1c">0.70 µm</div>
<svg class="a" style="left:5px;top:293px" width="18" height="16" viewBox="0 0 18 16"><path d="M3.5 15C1.5 10 1.5 3 6.5 2C10 1.3 12.5 3 13.5 5.5C15 8 16 9.5 17 11C13.5 9.5 9 9.5 3.5 15Z" fill="#101018"/><path d="M3.5 10.5C2.5 6 3.5 3 6.8 2.8C9.5 2.5 11.5 4 12.5 6C9.5 6 6 7.5 3.5 10.5Z" fill="#b01838"/><path d="M4.5 13.2C4 11.5 4 10.8 4.5 10C7.5 7.5 10.5 6.8 13 7C14 8.2 14.5 9 15 9.8C11 9 8 10 4.5 13.2Z" fill="#2ac04a"/></svg>
<svg class="a" style="left:600px;top:295px" width="19" height="15" viewBox="0 0 19 15"><path d="M3 7.2L7.9 11.8L15.8 2" stroke="#18722a" stroke-width="2.6" fill="none"/></svg>
<div class="hl" style="left:4px;top:336px;width:702px"></div>
<div class="g" style="left:29.8px;top:318.6px;color:#1c1c1c">Angle Difference</div>
<div class="g" style="left:138.6px;top:318.6px;color:#1c1c1c">Top -> Middle</div>
<div class="g" style="left:262.8px;top:318.6px;color:#1c1c1c">0.00 °</div>
<div class="g" style="left:390.6px;top:318.6px;color:#1c1c1c">0.09 °</div>
<svg class="a" style="left:5px;top:317px" width="18" height="16" viewBox="0 0 18 16"><path d="M15 2.2L3.2 13.5H16" stroke="#111" stroke-width="1.2" fill="none"/></svg>
<svg class="a" style="left:602px;top:318px" width="14" height="13" viewBox="0 0 14 13"><path d="M1.7 1L12.7 12M12.7 1L1.7 12" stroke="#6a1222" stroke-width="1.8"/></svg>
<div class="hl" style="left:4px;top:360px;width:702px"></div>
<div class="g" style="left:29.8px;top:342.6px;color:#1c1c1c">Vmc</div>
<div class="g" style="left:138.6px;top:342.6px;color:#1c1c1c">Top</div>
<div class="g" style="left:262.8px;top:342.6px;color:#1c1c1c">0.00 µl/m²</div>
<div class="g" style="left:390.6px;top:342.6px;color:#1c1c1c">3809.89 µl/m²</div>
<svg class="a" style="left:5px;top:341px" width="18" height="16" viewBox="0 0 18 16"><path d="M3.5 15C1.5 10 1.5 3 6.5 2C10 1.3 12.5 3 13.5 5.5C15 8 16 9.5 17 11C13.5 9.5 9 9.5 3.5 15Z" fill="#101018"/><path d="M3.5 10.5C2.5 6 3.5 3 6.8 2.8C9.5 2.5 11.5 4 12.5 6C9.5 6 6 7.5 3.5 10.5Z" fill="#b01838"/><path d="M4.5 13.2C4 11.5 4 10.8 4.5 10C7.5 7.5 10.5 6.8 13 7C14 8.2 14.5 9 15 9.8C11 9 8 10 4.5 13.2Z" fill="#2ac04a"/></svg>
<svg class="a" style="left:600px;top:343px" width="19" height="15" viewBox="0 0 19 15"><path d="M3 7.2L7.9 11.8L15.8 2" stroke="#18722a" stroke-width="2.6" fill="none"/></svg>
<div class="vl" style="left:134px;top:144px;height:215px;background:#a0a0a0"></div>
<div class="vl" style="left:258px;top:144px;height:215px;background:#a0a0a0"></div>
<div class="vl" style="left:386px;top:144px;height:215px;background:#a0a0a0"></div>
<div class="vl" style="left:511px;top:144px;height:215px;background:#e3e3e3"></div>
</div>

<!-- bottom -->
<div class="hl" style="left:0;top:660px;width:1067px"></div>
<div class="btn" style="left:18px;top:665px;width:77px;height:16px"></div>
<div class="btxt" style="left:18px;width:77px;top:668.5px">Remeasure</div>
<div class="btn" style="left:101px;top:665px;width:77px;height:16px"></div>
<div class="btxt" style="left:101px;width:77px;top:668.5px">Accept Results</div>
<div class="hl" style="left:0;top:686px;width:1067px"></div>
<div class="t sm" style="left:20px;top:697.5px">Export:</div>
<div class="btn" style="left:54px;top:694px;width:64px;height:15px"></div>
<div class="btxt" style="left:54px;width:64px;top:696.5px">ASCII (Matrix)</div>
<div class="btn" style="left:124px;top:694px;width:53px;height:15px"></div>
<div class="btxt" style="left:124px;width:53px;top:696.5px">qs-STAT</div>
<div class="btn" style="left:183px;top:694px;width:53px;height:15px"></div>
<div class="btxt" style="left:183px;width:53px;top:696.5px">Graphic</div>
</body></html>
